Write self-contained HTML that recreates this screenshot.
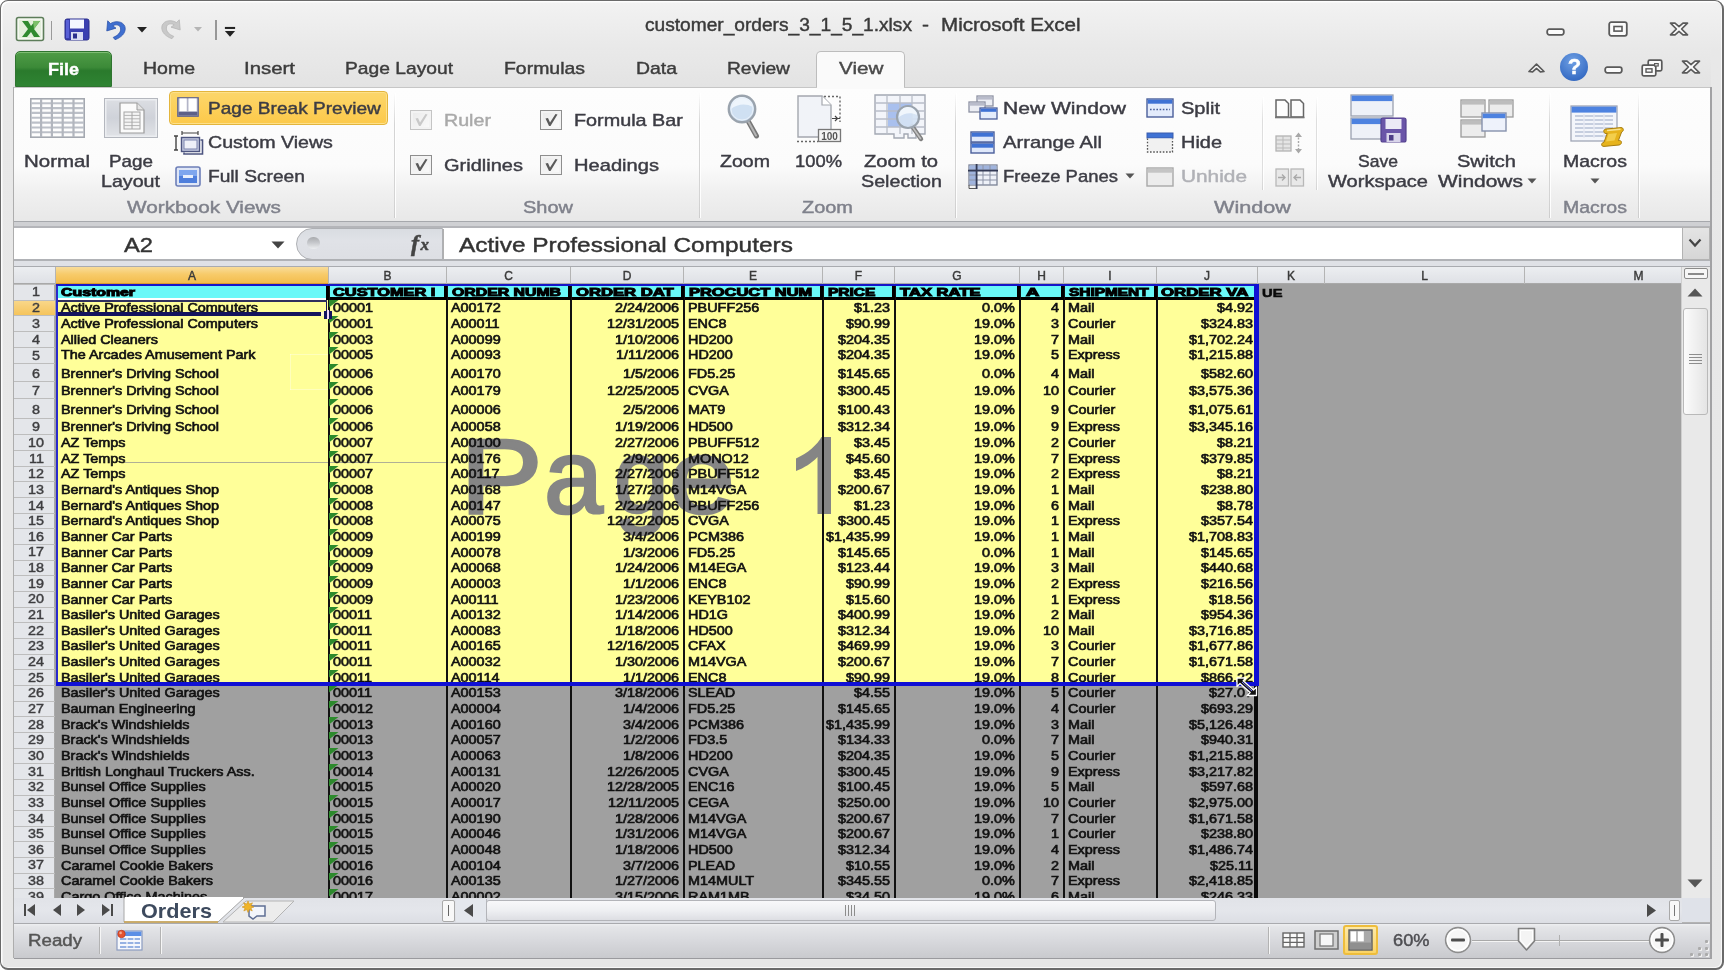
<!DOCTYPE html>
<html><head><meta charset="utf-8"><title>Excel</title>
<style>
html,body{margin:0;padding:0;}
body{width:1724px;height:970px;overflow:hidden;background:#fff;position:relative;font-family:"Liberation Sans",sans-serif;}
.t{position:absolute;white-space:pre;display:block;}
.a{position:absolute;}
svg{position:absolute;overflow:visible;}
#root{position:absolute;left:0;top:0;width:1724px;height:970px;filter:blur(0.55px);}

</style></head>
<body><div id="root">
<div class="a" style="left:0;top:0;width:1724px;height:970px;box-sizing:border-box;border:1.6px solid #6a6a6a;border-bottom-width:2.2px;border-right-width:2px;border-radius:8px 9px 8px 8px;background:linear-gradient(#f0f0f0 0,#e8e8e8 50px,#e6e6e6 100%);box-shadow:inset 1.5px 1.5px 0 rgba(255,255,255,0.9),inset -1px -1px 0 rgba(255,255,255,0.7);"></div>
<div class="a" style="left:3px;top:3px;width:1718px;height:47px;border-radius:7px 7px 0 0;background:linear-gradient(#f2f2f2,#e8e8e8);"></div>
<div class="a" style="left:13px;top:50px;width:1698px;height:37px;background:linear-gradient(#e9e9e9,#e3e3e3);"></div>
<div class="a" style="left:12.5px;top:87px;width:1.5px;height:871px;background:#adadad;"></div>
<div class="a" style="left:1710.2px;top:87px;width:1.4px;height:872px;background:#a2a2a4;"></div>
<span class="t" style="left:645.0px;transform-origin:0 0;top:15.8px;font-size:18.0px;line-height:18.0px;color:#3a3a3a;transform:scaleX(1.063);-webkit-text-stroke:0.42px #3a3a3a;">customer_orders_3_1_5_1.xlsx</span>
<span class="t" style="left:922.0px;transform-origin:0 0;top:15.8px;font-size:18.0px;line-height:18.0px;color:#3a3a3a;transform:scaleX(1.168);-webkit-text-stroke:0.42px #3a3a3a;">-</span>
<span class="t" style="left:940.5px;transform-origin:0 0;top:15.8px;font-size:18.0px;line-height:18.0px;color:#3a3a3a;transform:scaleX(1.143);-webkit-text-stroke:0.42px #3a3a3a;">Microsoft Excel</span>
<svg style="left:16px;top:16px" width="30" height="28" viewBox="0 0 30 28"><rect x="0.5" y="1.5" width="27" height="23" rx="2" fill="#f4f8f0" stroke="#5d7d5a" stroke-width="1.6"/><rect x="3" y="4" width="22" height="18" fill="#e3efdc"/><path d="M6 5 L12 5 L15 10 L19 5 L24 5 L18 13 L24 21 L18 21 L15 16 L11 21 L6 21 L12 13 Z" fill="#2f8a2f"/><path d="M17 5 L24 5 L18 13 Z" fill="#7cc06a"/></svg>
<div class="a" style="left:51px;top:21px;width:1px;height:19px;background:#9a9a9a;"></div>
<svg style="left:64px;top:18px" width="27" height="24" viewBox="0 0 27 24"><rect x="1" y="1" width="24" height="21" rx="2" fill="#3a3fb0" stroke="#2b2f8e" stroke-width="1"/><rect x="6" y="1.5" width="14" height="9" fill="#f4f6ff"/><rect x="7" y="14" width="12" height="8" fill="#d9dcf2"/><rect x="9" y="15.5" width="4" height="5" fill="#2b2f8e"/><rect x="2" y="2" width="3" height="18" fill="#5960d6"/></svg>
<svg style="left:103px;top:18px" width="26" height="24" viewBox="0 0 28 26"><path d="M5 3 L4 14 L14 11 L10.5 8.5 C15 6 19 8 19 12 C19 16 16 19 11 21 L13 23.5 C20 21 24 16.5 24 11.5 C24 5 15.5 1.5 8 6 Z" fill="#3f6fd0" stroke="#2a50a8" stroke-width="0.8"/></svg>
<svg style="left:135.5px;top:25.5px" width="12" height="8" viewBox="0 0 12 8"><path d="M1 1 L11 1 L6 6.5 Z" fill="#222"/></svg>
<svg style="left:158px;top:17px" width="26" height="24" viewBox="0 0 28 26"><path d="M23 3 L24 14 L14 11 L17.5 8.5 C13 6 9 8 9 12 C9 16 12 19 17 21 L15 23.5 C8 21 4 16.5 4 11.5 C4 5 12.5 1.5 20 6 Z" fill="#c9c9c9" stroke="#b4b4b4" stroke-width="0.8"/></svg>
<svg style="left:193px;top:26px" width="10" height="7" viewBox="0 0 10 7"><path d="M1 1 L9 1 L5 5.5 Z" fill="#b5b5b5"/></svg>
<div class="a" style="left:215px;top:20px;width:1.5px;height:20px;background:#979797;"></div>
<svg style="left:222.5px;top:25.5px" width="14" height="13" viewBox="0 0 14 14"><rect x="1.5" y="1" width="11" height="2.2" fill="#222"/><path d="M1.5 5.5 L12.5 5.5 L7 11.5 Z" fill="#222"/></svg>
<svg style="left:1546px;top:28px" width="19" height="8" viewBox="0 0 19 8"><rect x="1.2" y="1.2" width="16.6" height="5.6" rx="2" fill="#fbfbfb" stroke="#5a5a5a" stroke-width="1.8"/></svg>
<svg style="left:1608px;top:21px" width="20" height="16" viewBox="0 0 20 16"><rect x="1.2" y="1.2" width="17.6" height="13.6" rx="2" fill="#fbfbfb" stroke="#5a5a5a" stroke-width="1.8"/><rect x="6" y="5.5" width="8" height="4.6" fill="#fbfbfb" stroke="#5a5a5a" stroke-width="1.6"/></svg>
<svg style="left:1669px;top:22px" width="20" height="14" viewBox="0 0 20 14" preserveAspectRatio="none"><path d="M1.5 1.2 L6 1.2 L10 4.6 L14 1.2 L18.5 1.2 L12.6 7 L18.5 12.8 L14 12.8 L10 9.4 L6 12.8 L1.5 12.8 L7.4 7 Z" fill="#fbfbfb" stroke="#5a5a5a" stroke-width="1.7" stroke-linejoin="round"/></svg>
<svg style="left:1527px;top:62px" width="19" height="12" viewBox="0 0 19 12"><path d="M2 9.5 L9.5 2.2 L17 9.5 L13.4 9.9 L9.5 6.4 L5.6 9.9 Z" fill="#fbfbfb" stroke="#5a5a5a" stroke-width="1.7" stroke-linejoin="round"/></svg>
<div class="a" style="left:1560px;top:53px;width:28px;height:28px;border-radius:14px;background:radial-gradient(circle at 45% 30%,#6fa0e4,#3a6fc6 70%,#2d5fb4);"></div>
<span class="t" style="left:1567.8px;transform-origin:0 0;top:56.4px;font-size:22.0px;line-height:22.0px;color:#fff;font-weight:bold;transform:scaleX(1.000);-webkit-text-stroke:0.42px #fff;">?</span>
<svg style="left:1604px;top:66px" width="19" height="8" viewBox="0 0 19 8"><rect x="1.2" y="1.2" width="16.6" height="5.6" rx="2" fill="#fbfbfb" stroke="#5a5a5a" stroke-width="1.8"/></svg>
<svg style="left:1641px;top:59px" width="22" height="18" viewBox="0 0 22 18"><rect x="7.2" y="1.2" width="13.6" height="10.6" rx="1.5" fill="#fbfbfb" stroke="#5a5a5a" stroke-width="1.7"/><rect x="1.2" y="6.2" width="13.6" height="10.6" rx="1.5" fill="#fbfbfb" stroke="#5a5a5a" stroke-width="1.7"/><rect x="5" y="9.8" width="6" height="3.4" fill="#fbfbfb" stroke="#5a5a5a" stroke-width="1.4"/><rect x="13.6" y="4.6" width="3.6" height="2.4" fill="#fbfbfb" stroke="#5a5a5a" stroke-width="1.2"/></svg>
<svg style="left:1681px;top:60px" width="20" height="14" viewBox="0 0 20 14" preserveAspectRatio="none"><path d="M1.5 1.2 L6 1.2 L10 4.6 L14 1.2 L18.5 1.2 L12.6 7 L18.5 12.8 L14 12.8 L10 9.4 L6 12.8 L1.5 12.8 L7.4 7 Z" fill="#fbfbfb" stroke="#5a5a5a" stroke-width="1.7" stroke-linejoin="round"/></svg>
<div class="a" style="left:15px;top:51px;width:97px;height:36px;border-radius:5px 5px 0 0;background:linear-gradient(#4f9c47 0,#3c8a38 45%,#2a7a2c 55%,#2f8433 100%);border:1px solid #2f7430;box-sizing:border-box;box-shadow:inset 0 1px 0 #7fbd74;"></div>
<span class="t" style="left:48.0px;transform-origin:0 0;top:60.6px;font-size:17.0px;line-height:17.0px;color:#fff;font-weight:bold;transform:scaleX(1.059);-webkit-text-stroke:0.42px #fff;">File</span>
<span class="t" style="left:143.0px;transform-origin:0 0;top:60.1px;font-size:17.0px;line-height:17.0px;color:#3c3c3c;transform:scaleX(1.147);-webkit-text-stroke:0.42px #3c3c3c;">Home</span>
<span class="t" style="left:244.0px;transform-origin:0 0;top:60.1px;font-size:17.0px;line-height:17.0px;color:#3c3c3c;transform:scaleX(1.200);-webkit-text-stroke:0.42px #3c3c3c;">Insert</span>
<span class="t" style="left:345.0px;transform-origin:0 0;top:60.1px;font-size:17.0px;line-height:17.0px;color:#3c3c3c;transform:scaleX(1.131);-webkit-text-stroke:0.42px #3c3c3c;">Page Layout</span>
<span class="t" style="left:504.0px;transform-origin:0 0;top:60.1px;font-size:17.0px;line-height:17.0px;color:#3c3c3c;transform:scaleX(1.143);-webkit-text-stroke:0.42px #3c3c3c;">Formulas</span>
<span class="t" style="left:636.0px;transform-origin:0 0;top:60.1px;font-size:17.0px;line-height:17.0px;color:#3c3c3c;transform:scaleX(1.142);-webkit-text-stroke:0.42px #3c3c3c;">Data</span>
<span class="t" style="left:727.0px;transform-origin:0 0;top:60.1px;font-size:17.0px;line-height:17.0px;color:#3c3c3c;transform:scaleX(1.130);-webkit-text-stroke:0.42px #3c3c3c;">Review</span>
<div class="a" style="left:816px;top:51px;width:89px;height:37px;border-radius:5px 5px 0 0;background:#fafafa;border:1px solid #bdbdbd;border-bottom:none;box-sizing:border-box;"></div>
<span class="t" style="left:839.0px;transform-origin:0 0;top:60.1px;font-size:17.0px;line-height:17.0px;color:#4a4a4a;transform:scaleX(1.218);-webkit-text-stroke:0.42px #4a4a4a;">View</span>
<div class="a" style="left:14px;top:87px;width:1696px;height:134.6px;background:linear-gradient(#fdfdfd 0,#fbfbfb 58%,#f0f0f0 78%,#e8e8e8 100%);border-top:1px solid #c6c6c6;border-bottom:1.8px solid #a6a8ac;box-sizing:border-box;"></div>
<div class="a" style="left:817px;top:86px;width:87px;height:3px;background:#fafafa;"></div>
<div class="a" style="left:394px;top:93px;width:1px;height:125px;background:linear-gradient(rgba(0,0,0,0),#d4d4d4 25%,#d4d4d4 80%,rgba(0,0,0,0.12));"></div>
<div class="a" style="left:395px;top:93px;width:1px;height:125px;background:rgba(255,255,255,0.9);"></div>
<div class="a" style="left:699px;top:93px;width:1px;height:125px;background:linear-gradient(rgba(0,0,0,0),#d4d4d4 25%,#d4d4d4 80%,rgba(0,0,0,0.12));"></div>
<div class="a" style="left:700px;top:93px;width:1px;height:125px;background:rgba(255,255,255,0.9);"></div>
<div class="a" style="left:955px;top:93px;width:1px;height:125px;background:linear-gradient(rgba(0,0,0,0),#d4d4d4 25%,#d4d4d4 80%,rgba(0,0,0,0.12));"></div>
<div class="a" style="left:956px;top:93px;width:1px;height:125px;background:rgba(255,255,255,0.9);"></div>
<div class="a" style="left:1549px;top:93px;width:1px;height:125px;background:linear-gradient(rgba(0,0,0,0),#d4d4d4 25%,#d4d4d4 80%,rgba(0,0,0,0.12));"></div>
<div class="a" style="left:1550px;top:93px;width:1px;height:125px;background:rgba(255,255,255,0.9);"></div>
<div class="a" style="left:1638px;top:93px;width:1px;height:125px;background:linear-gradient(rgba(0,0,0,0),#d4d4d4 25%,#d4d4d4 80%,rgba(0,0,0,0.12));"></div>
<div class="a" style="left:1639px;top:93px;width:1px;height:125px;background:rgba(255,255,255,0.9);"></div>
<div class="a" style="left:1262px;top:97px;width:1px;height:93px;background:linear-gradient(rgba(0,0,0,0),#dedede 25%,#dedede 80%,rgba(0,0,0,0.12));"></div>
<div class="a" style="left:1263px;top:97px;width:1px;height:93px;background:rgba(255,255,255,0.9);"></div>
<div class="a" style="left:1316px;top:97px;width:1px;height:93px;background:linear-gradient(rgba(0,0,0,0),#dedede 25%,#dedede 80%,rgba(0,0,0,0.12));"></div>
<div class="a" style="left:1317px;top:97px;width:1px;height:93px;background:rgba(255,255,255,0.9);"></div>
<svg style="left:30px;top:98px" width="55" height="40" viewBox="0 0 55 40"><rect x="0.8" y="0.8" width="53.4" height="38.4" fill="#fdfdfd" stroke="#a4a8b0" stroke-width="1.6"/><line x1="1" x2="54" y1="5.2" y2="5.2" stroke="#bcc0c8" stroke-width="2.1"/><line x1="1" x2="54" y1="10.1" y2="10.1" stroke="#bcc0c8" stroke-width="2.1"/><line x1="1" x2="54" y1="14.9" y2="14.9" stroke="#bcc0c8" stroke-width="2.1"/><line x1="1" x2="54" y1="19.8" y2="19.8" stroke="#bcc0c8" stroke-width="2.1"/><line x1="1" x2="54" y1="24.6" y2="24.6" stroke="#bcc0c8" stroke-width="2.1"/><line x1="1" x2="54" y1="29.5" y2="29.5" stroke="#bcc0c8" stroke-width="2.1"/><line x1="1" x2="54" y1="34.3" y2="34.3" stroke="#bcc0c8" stroke-width="2.1"/><line y1="1" y2="39" x1="11.1" x2="11.1" stroke="#b2b6be" stroke-width="2.2"/><line y1="1" y2="39" x1="21.9" x2="21.9" stroke="#b2b6be" stroke-width="2.2"/><line y1="1" y2="39" x1="32.7" x2="32.7" stroke="#b2b6be" stroke-width="2.2"/><line y1="1" y2="39" x1="43.5" x2="43.5" stroke="#b2b6be" stroke-width="2.2"/></svg>
<span class="t" style="left:24.0px;transform-origin:0 0;top:152.7px;font-size:16.4px;line-height:16.4px;color:#3c3c44;transform:scaleX(1.249);-webkit-text-stroke:0.42px #3c3c44;">Normal</span>
<div class="a" style="left:104px;top:98px;width:54px;height:40px;box-sizing:border-box;border:1.4px solid #b4b7be;background:linear-gradient(#dcdee3,#cfd2d9 50%,#e1e3e7);box-shadow:inset 0 0 0 1.5px #eceef1;"></div>
<svg style="left:119px;top:102px" width="26" height="32" viewBox="0 0 26 32"><path d="M1 1 L18 1 L25 8 L25 31 L1 31 Z" fill="#fbfbfb" stroke="#9b9b9b" stroke-width="1.2"/><path d="M18 1 L18 8 L25 8" fill="#e4e4e4" stroke="#9b9b9b" stroke-width="1"/><rect x="5" y="10" width="16" height="17" fill="#f4f4f4" stroke="#a6a6a6" stroke-width="1"/><line x1="5" x2="21" y1="13.4" y2="13.4" stroke="#b4b4b4"/><line x1="5" x2="21" y1="16.8" y2="16.8" stroke="#b4b4b4"/><line x1="5" x2="21" y1="20.2" y2="20.2" stroke="#b4b4b4"/><line x1="5" x2="21" y1="23.6" y2="23.6" stroke="#b4b4b4"/><line x1="13" x2="13" y1="10" y2="27" stroke="#a6a6a6"/></svg>
<span class="t" style="left:109.0px;transform-origin:0 0;top:152.7px;font-size:16.4px;line-height:16.4px;color:#3c3c44;transform:scaleX(1.149);-webkit-text-stroke:0.42px #3c3c44;">Page</span>
<span class="t" style="left:101.0px;transform-origin:0 0;top:172.9px;font-size:16.4px;line-height:16.4px;color:#3c3c44;transform:scaleX(1.198);-webkit-text-stroke:0.42px #3c3c44;">Layout</span>
<div class="a" style="left:169px;top:91px;width:219px;height:34px;box-sizing:border-box;border:1.5px solid #e3b53c;border-radius:4px;background:linear-gradient(#fbd66b,#fdd05a 50%,#fcc94a);box-shadow:inset 0 0 0 1px #fde08a;"></div>
<svg style="left:176.5px;top:97px" width="22" height="20" viewBox="0 0 23 22" preserveAspectRatio="none"><rect x="0.8" y="0.8" width="21.4" height="20.4" fill="#b3b5c8" stroke="#62658c" stroke-width="1.3"/><rect x="2.6" y="1.6" width="7.6" height="14" fill="#fff"/><rect x="12" y="1.6" width="8.6" height="14" fill="#fff"/><rect x="1.6" y="16.4" width="19.8" height="4" fill="#5d6088"/></svg>
<span class="t" style="left:208.0px;transform-origin:0 0;top:99.8px;font-size:16.4px;line-height:16.4px;color:#3c3c44;transform:scaleX(1.164);-webkit-text-stroke:0.42px #3c3c44;">Page Break Preview</span>
<svg style="left:173px;top:130px" width="32" height="25" viewBox="0 0 32 25"><path d="M1 6 L5 6 M3 6 L3 20 M1 20 L5 20" stroke="#444" stroke-width="1.4" fill="none"/><path d="M9 1 L9 5 M25 1 L25 5 M9 3 L25 3" stroke="#444" stroke-width="1.2" fill="none"/><rect x="8.5" y="7.5" width="18" height="14" fill="#c6cbe0" stroke="#4d5580" stroke-width="1.4"/><rect x="11" y="10" width="13" height="9" fill="#eef0f8" stroke="#7a83ad"/><path d="M27.5 10 L29.5 10 L29.5 24 L11 24 L11 22.5" fill="none" stroke="#4d5580" stroke-width="1.6"/></svg>
<span class="t" style="left:208.0px;transform-origin:0 0;top:134.4px;font-size:16.4px;line-height:16.4px;color:#3c3c44;transform:scaleX(1.196);-webkit-text-stroke:0.42px #3c3c44;">Custom Views</span>
<svg style="left:175px;top:166px" width="26" height="21" viewBox="0 0 26 21"><rect x="1" y="1" width="24" height="19" rx="2" fill="#dfe6f6" stroke="#6d7fb8" stroke-width="1.6"/><rect x="4" y="4" width="18" height="13" fill="#4f7fdc"/><rect x="4" y="4" width="18" height="6" fill="#7ea6ee"/><rect x="8" y="9" width="10" height="3" fill="#e8effc"/></svg>
<span class="t" style="left:208.0px;transform-origin:0 0;top:168.4px;font-size:16.4px;line-height:16.4px;color:#3c3c44;transform:scaleX(1.169);-webkit-text-stroke:0.42px #3c3c44;">Full Screen</span>
<span class="t" style="left:127.0px;transform-origin:0 0;top:199.3px;font-size:16.4px;line-height:16.4px;color:#7f818b;transform:scaleX(1.267);-webkit-text-stroke:0.42px #7f818b;">Workbook Views</span>
<div class="a" style="left:410px;top:110px;width:22px;height:20px;box-sizing:border-box;border:1.5px solid #c4c4c4;background:linear-gradient(135deg,#e9e9e9,#fbfbfb);box-shadow:inset 0 0 0 2px #f3f3f3;"></div>
<svg style="left:410px;top:110px" width="22" height="20" viewBox="0 0 22 20"><path d="M5.5 8.5 L8 8 L10 12.5 L15.5 4 L17.5 4.6 L10.5 16 L9 16 Z" fill="#c9c9c9"/></svg>
<div class="a" style="left:410px;top:155px;width:22px;height:20px;box-sizing:border-box;border:1.5px solid #8e8e8e;background:linear-gradient(135deg,#e9e9e9,#fbfbfb);box-shadow:inset 0 0 0 2px #f3f3f3;"></div>
<svg style="left:410px;top:155px" width="22" height="20" viewBox="0 0 22 20"><path d="M5.5 8.5 L8 8 L10 12.5 L15.5 4 L17.5 4.6 L10.5 16 L9 16 Z" fill="#5a5a5a"/></svg>
<div class="a" style="left:540px;top:110px;width:22px;height:20px;box-sizing:border-box;border:1.5px solid #8e8e8e;background:linear-gradient(135deg,#e9e9e9,#fbfbfb);box-shadow:inset 0 0 0 2px #f3f3f3;"></div>
<svg style="left:540px;top:110px" width="22" height="20" viewBox="0 0 22 20"><path d="M5.5 8.5 L8 8 L10 12.5 L15.5 4 L17.5 4.6 L10.5 16 L9 16 Z" fill="#5a5a5a"/></svg>
<div class="a" style="left:540px;top:155px;width:22px;height:20px;box-sizing:border-box;border:1.5px solid #8e8e8e;background:linear-gradient(135deg,#e9e9e9,#fbfbfb);box-shadow:inset 0 0 0 2px #f3f3f3;"></div>
<svg style="left:540px;top:155px" width="22" height="20" viewBox="0 0 22 20"><path d="M5.5 8.5 L8 8 L10 12.5 L15.5 4 L17.5 4.6 L10.5 16 L9 16 Z" fill="#5a5a5a"/></svg>
<span class="t" style="left:444.0px;transform-origin:0 0;top:112.1px;font-size:16.4px;line-height:16.4px;color:#a9a9a9;transform:scaleX(1.199);-webkit-text-stroke:0.42px #a9a9a9;">Ruler</span>
<span class="t" style="left:574.0px;transform-origin:0 0;top:112.1px;font-size:16.4px;line-height:16.4px;color:#3c3c44;transform:scaleX(1.208);-webkit-text-stroke:0.42px #3c3c44;">Formula Bar</span>
<span class="t" style="left:444.0px;transform-origin:0 0;top:157.2px;font-size:16.4px;line-height:16.4px;color:#3c3c44;transform:scaleX(1.221);-webkit-text-stroke:0.42px #3c3c44;">Gridlines</span>
<span class="t" style="left:574.0px;transform-origin:0 0;top:157.2px;font-size:16.4px;line-height:16.4px;color:#3c3c44;transform:scaleX(1.227);-webkit-text-stroke:0.42px #3c3c44;">Headings</span>
<span class="t" style="left:523.0px;transform-origin:0 0;top:199.3px;font-size:16.4px;line-height:16.4px;color:#7f818b;transform:scaleX(1.219);-webkit-text-stroke:0.42px #7f818b;">Show</span>
<svg style="left:726px;top:94px" width="36" height="48" viewBox="0 0 36 48"><path d="M21 25 L30.5 42" stroke="#777" stroke-width="5" stroke-linecap="round"/><path d="M21.5 26 L30 41.5" stroke="#b5b5b5" stroke-width="2" stroke-linecap="round"/><circle cx="16" cy="15" r="13.2" fill="#cfe0f2" stroke="#9aa3ad" stroke-width="2.4"/><path d="M5 15 A11 11 0 0 1 27 13 C20 9 11 10 5 15Z" fill="#eef5fc"/><circle cx="16" cy="15" r="11" fill="none" stroke="#e9f1fa" stroke-width="1"/></svg>
<span class="t" style="left:720.0px;transform-origin:0 0;top:152.7px;font-size:16.4px;line-height:16.4px;color:#3c3c44;transform:scaleX(1.193);-webkit-text-stroke:0.42px #3c3c44;">Zoom</span>
<svg style="left:796px;top:94px" width="46" height="50" viewBox="0 0 46 50"><path d="M2 2 L26 2 L35 11 L35 43 L2 43 Z" fill="#f1f3f8" stroke="#a4a7ae" stroke-width="1.4"/><path d="M26 2 L26 11 L35 11" fill="#fff" stroke="#a4a7ae" stroke-width="1.2"/><path d="M28 2.5 L44 2.5 L44 28" fill="none" stroke="#666" stroke-width="1.4" stroke-dasharray="2 2"/><path d="M1 47.5 L22 47.5" fill="none" stroke="#666" stroke-width="1.4" stroke-dasharray="2 2"/><path d="M36 24.5 L44 24.5 M39 22 L41.5 24.5 L39 27" stroke="#444" stroke-width="1.2" fill="none"/><rect x="22.5" y="35.5" width="22" height="12" fill="#f4f4f4" stroke="#777" stroke-width="1.3"/><text x="33.5" y="45.5" font-family="Liberation Sans" font-weight="bold" font-size="10" text-anchor="middle" fill="#555">100</text></svg>
<span class="t" style="left:795.0px;transform-origin:0 0;top:152.7px;font-size:16.4px;line-height:16.4px;color:#3c3c44;transform:scaleX(1.120);-webkit-text-stroke:0.42px #3c3c44;">100%</span>
<svg style="left:874px;top:94px" width="52" height="50" viewBox="0 0 52 50"><path d="M1 1 L51 1 L51 40 L42 40 L42 44 L34 44 L34 40 L30 40 L30 44 L20 44 L20 40 L1 40 Z" fill="#f3f5fa" stroke="#a3a8b3" stroke-width="1.4"/><rect x="14" y="9" width="24" height="24" fill="#a9c0ee"/><line x1="1" x2="51" y1="9" y2="9" stroke="#b8bdc8" stroke-width="1.3"/><line x1="1" x2="51" y1="17" y2="17" stroke="#b8bdc8" stroke-width="1.3"/><line x1="1" x2="51" y1="25" y2="25" stroke="#b8bdc8" stroke-width="1.3"/><line x1="1" x2="51" y1="33" y2="33" stroke="#b8bdc8" stroke-width="1.3"/><line y1="1" y2="40" x1="13" x2="13" stroke="#b8bdc8" stroke-width="1.3"/><line y1="1" y2="40" x1="26" x2="26" stroke="#b8bdc8" stroke-width="1.3"/><line y1="1" y2="40" x1="38" x2="38" stroke="#b8bdc8" stroke-width="1.3"/><path d="M38 32 L47 45" stroke="#808080" stroke-width="4.5" stroke-linecap="round"/><path d="M38.5 33 L46.5 44.5" stroke="#c0c0c0" stroke-width="1.6" stroke-linecap="round"/><circle cx="34" cy="23" r="11" fill="#d5e3f4" fill-opacity="0.92" stroke="#9aa3ad" stroke-width="2.2"/><path d="M25 23 A9 9 0 0 1 43 21 C37 18 30 19 25 23Z" fill="#f0f6fc"/></svg>
<span class="t" style="left:864.0px;transform-origin:0 0;top:152.7px;font-size:16.4px;line-height:16.4px;color:#3c3c44;transform:scaleX(1.230);-webkit-text-stroke:0.42px #3c3c44;">Zoom to</span>
<span class="t" style="left:861.0px;transform-origin:0 0;top:172.9px;font-size:16.4px;line-height:16.4px;color:#3c3c44;transform:scaleX(1.201);-webkit-text-stroke:0.42px #3c3c44;">Selection</span>
<span class="t" style="left:802.0px;transform-origin:0 0;top:199.3px;font-size:16.4px;line-height:16.4px;color:#7f818b;transform:scaleX(1.217);-webkit-text-stroke:0.42px #7f818b;">Zoom</span>
<svg style="left:968px;top:95px" width="30" height="26" viewBox="0 0 30 26"><rect x="9.0" y="1.0" width="16.0" height="10.0" fill="#eceef4" stroke="#8d91a3" stroke-width="1.3"/><rect x="9.7" y="1.6" width="14.7" height="3.0" fill="#b9bccb"/><rect x="1.0" y="7.0" width="16.0" height="10.0" fill="#eceef4" stroke="#8d91a3" stroke-width="1.3"/><rect x="1.6" y="7.7" width="14.7" height="3.0" fill="#b9bccb"/><rect x="12.0" y="13.0" width="17.0" height="11.0" fill="#e4ecfb" stroke="#4a5f9a" stroke-width="1.3"/><rect x="12.7" y="13.7" width="15.7" height="3.1" fill="#3f72d4"/></svg>
<span class="t" style="left:1003.0px;transform-origin:0 0;top:99.8px;font-size:16.4px;line-height:16.4px;color:#3c3c44;transform:scaleX(1.285);-webkit-text-stroke:0.42px #3c3c44;">New Window</span>
<svg style="left:970px;top:131px" width="26" height="24" viewBox="0 0 26 24"><rect x="1.0" y="1.0" width="23.0" height="10.0" fill="#dfe8fa" stroke="#4a5f9a" stroke-width="1.4"/><rect x="1.7" y="1.7" width="21.6" height="4.0" fill="#3f72d4"/><rect x="1.0" y="12.0" width="23.0" height="10.0" fill="#dfe8fa" stroke="#4a5f9a" stroke-width="1.4"/><rect x="1.7" y="12.7" width="21.6" height="4.0" fill="#3f72d4"/></svg>
<span class="t" style="left:1003.0px;transform-origin:0 0;top:134.4px;font-size:16.4px;line-height:16.4px;color:#3c3c44;transform:scaleX(1.234);-webkit-text-stroke:0.42px #3c3c44;">Arrange All</span>
<svg style="left:968px;top:164px" width="30" height="26" viewBox="0 0 30 26"><rect x="1" y="1" width="28" height="20" fill="#eef1f8" stroke="#7a8194" stroke-width="1.3"/><rect x="1.6" y="1.6" width="26.8" height="5" fill="#9fb3dd"/><rect x="1.6" y="1.6" width="7" height="19" fill="#9fb3dd"/><line x1="1" x2="29" y1="6" y2="6" stroke="#8c93a6" stroke-width="1"/><line x1="1" x2="29" y1="11" y2="11" stroke="#8c93a6" stroke-width="1"/><line x1="1" x2="29" y1="16" y2="16" stroke="#8c93a6" stroke-width="1"/><line y1="1" y2="21" x1="15" x2="15" stroke="#8c93a6" stroke-width="1"/><line y1="1" y2="21" x1="22" x2="22" stroke="#8c93a6" stroke-width="1"/><path d="M8.6 0 L8.6 25 M0 6.6 L30 6.6" stroke="#333a55" stroke-width="1.8"/><path d="M1 21 L1 24.5 L8 24.5" stroke="#555" fill="none"/></svg>
<span class="t" style="left:1003.0px;transform-origin:0 0;top:168.4px;font-size:16.4px;line-height:16.4px;color:#3c3c44;transform:scaleX(1.126);-webkit-text-stroke:0.42px #3c3c44;">Freeze Panes</span>
<svg style="left:1125px;top:173px" width="10" height="6" viewBox="0 0 10 6"><path d="M0.5 0.5 L9.5 0.5 L5 5.5 Z" fill="#555"/></svg>
<svg style="left:1146px;top:98px" width="28" height="21" viewBox="0 0 28 21"><rect x="1.0" y="1.0" width="26.0" height="18.0" fill="#e3ebfb" stroke="#4a5f9a" stroke-width="1.4"/><rect x="1.7" y="1.7" width="24.6" height="4.0" fill="#3f72d4"/><line x1="4" x2="24" y1="11.5" y2="11.5" stroke="#4a5f9a" stroke-width="1.4" stroke-dasharray="1.6 1.6"/></svg>
<span class="t" style="left:1181.0px;transform-origin:0 0;top:99.8px;font-size:16.4px;line-height:16.4px;color:#3c3c44;transform:scaleX(1.222);-webkit-text-stroke:0.42px #3c3c44;">Split</span>
<svg style="left:1146px;top:132px" width="28" height="22" viewBox="0 0 28 22"><rect x="1" y="1" width="26" height="5" fill="#3f72d4" stroke="#3a5cae" stroke-width="1"/><rect x="1.5" y="6.5" width="25" height="13" fill="#f1f1f1"/><path d="M1.5 6.5 L1.5 20 L26.5 20 L26.5 6.5" fill="none" stroke="#555" stroke-width="1.3" stroke-dasharray="1.6 1.6"/></svg>
<span class="t" style="left:1181.0px;transform-origin:0 0;top:134.4px;font-size:16.4px;line-height:16.4px;color:#3c3c44;transform:scaleX(1.216);-webkit-text-stroke:0.42px #3c3c44;">Hide</span>
<svg style="left:1146px;top:167px" width="28" height="21" viewBox="0 0 28 21"><rect x="1" y="1" width="26" height="18" fill="#ececec" stroke="#a8a8a8" stroke-width="1.4"/><rect x="1.7" y="1.7" width="24.6" height="4" fill="#c4c4c4"/></svg>
<span class="t" style="left:1181.0px;transform-origin:0 0;top:168.4px;font-size:16.4px;line-height:16.4px;color:#b0b1b6;transform:scaleX(1.270);-webkit-text-stroke:0.42px #b0b1b6;">Unhide</span>
<svg style="left:1274px;top:98px" width="32" height="21" viewBox="0 0 32 21"><path d="M2 2 L11 2 L14.5 5.5 L14.5 19 L2 19 Z" fill="#fdfdfd" stroke="#666" stroke-width="1.5"/><path d="M17 2 L26 2 L29.5 5.5 L29.5 19 L17 19 Z" fill="#fdfdfd" stroke="#666" stroke-width="1.5"/><path d="M1 19.5 L30.5 19.5" stroke="#777" stroke-width="1.6"/></svg>
<svg style="left:1274px;top:131px" width="32" height="24" viewBox="0 0 32 24"><rect x="2" y="5" width="15" height="15" fill="#e4e4e4" stroke="#b3b3b3" stroke-width="1.3"/><path d="M2 9 L17 9 M2 13 L17 13 M2 17 L17 17 M9 5 L9 20" stroke="#b9b9b9"/><path d="M24.5 3 L24.5 21" stroke="#a8a8a8" stroke-width="1.4" stroke-dasharray="2 1.5"/><path d="M21 6 L24.5 1.5 L28 6 Z M21 18 L24.5 22.5 L28 18 Z" fill="#a8a8a8"/></svg>
<svg style="left:1274px;top:167px" width="32" height="21" viewBox="0 0 32 21"><rect x="2" y="2" width="12.5" height="17" fill="#e8e8e8" stroke="#b8b8b8" stroke-width="1.3"/><rect x="17" y="2" width="12.5" height="17" fill="#e8e8e8" stroke="#b8b8b8" stroke-width="1.3"/><path d="M4 10.5 L11 10.5 M8 7.5 L11 10.5 L8 13.5" stroke="#a9a9a9" stroke-width="1.4" fill="none"/><path d="M27 10.5 L20 10.5 M23 7.5 L20 10.5 L23 13.5" stroke="#a9a9a9" stroke-width="1.4" fill="none"/></svg>
<svg style="left:1350px;top:94px" width="58" height="50" viewBox="0 0 58 50"><rect x="1.0" y="1.0" width="42.0" height="21.0" fill="#eef1f8" stroke="#9aa0b0" stroke-width="1.3"/><rect x="1.6" y="1.6" width="40.7" height="5.5" fill="#4d82e0"/><rect x="1.0" y="24.0" width="42.0" height="21.0" fill="#eef1f8" stroke="#9aa0b0" stroke-width="1.3"/><rect x="1.6" y="24.6" width="40.7" height="5.5" fill="#4d82e0"/><rect x="31" y="24" width="25" height="24" rx="2" fill="#6a55a8" stroke="#54418f" stroke-width="1.2"/><rect x="35.5" y="25" width="16" height="10" fill="#eceaf6"/><rect x="36.5" y="39" width="14" height="9" fill="#d9d5ea"/><rect x="39" y="41" width="4.5" height="5.5" fill="#4d3c86"/></svg>
<span class="t" style="left:1358.0px;transform-origin:0 0;top:152.7px;font-size:16.4px;line-height:16.4px;color:#3c3c44;transform:scaleX(1.070);-webkit-text-stroke:0.42px #3c3c44;">Save</span>
<span class="t" style="left:1328.0px;transform-origin:0 0;top:172.9px;font-size:16.4px;line-height:16.4px;color:#3c3c44;transform:scaleX(1.224);-webkit-text-stroke:0.42px #3c3c44;">Workspace</span>
<svg style="left:1460px;top:99px" width="56" height="42" viewBox="0 0 56 42"><rect x="1.0" y="1.0" width="24.0" height="17.0" fill="#ececec" stroke="#9a9a9a" stroke-width="1.3"/><rect x="1.6" y="1.6" width="22.7" height="4.0" fill="#bdbdbd"/><rect x="29.0" y="1.0" width="24.0" height="17.0" fill="#ececec" stroke="#9a9a9a" stroke-width="1.3"/><rect x="29.6" y="1.6" width="22.7" height="4.0" fill="#bdbdbd"/><rect x="1.0" y="21.0" width="24.0" height="17.0" fill="#ececec" stroke="#9a9a9a" stroke-width="1.3"/><rect x="1.6" y="21.6" width="22.7" height="4.0" fill="#bdbdbd"/><rect x="22.0" y="14.0" width="24.0" height="18.0" fill="#eef2fb" stroke="#8792ad" stroke-width="1.4"/><rect x="22.7" y="14.7" width="22.6" height="4.5" fill="#4d82e0"/></svg>
<span class="t" style="left:1457.0px;transform-origin:0 0;top:152.7px;font-size:16.4px;line-height:16.4px;color:#3c3c44;transform:scaleX(1.221);-webkit-text-stroke:0.42px #3c3c44;">Switch</span>
<span class="t" style="left:1438.0px;transform-origin:0 0;top:172.9px;font-size:16.4px;line-height:16.4px;color:#3c3c44;transform:scaleX(1.278);-webkit-text-stroke:0.42px #3c3c44;">Windows</span>
<svg style="left:1527px;top:178px" width="10" height="6" viewBox="0 0 10 6"><path d="M0.5 0.5 L9.5 0.5 L5 5.5 Z" fill="#555"/></svg>
<span class="t" style="left:1214.0px;transform-origin:0 0;top:199.3px;font-size:16.4px;line-height:16.4px;color:#7f818b;transform:scaleX(1.320);-webkit-text-stroke:0.42px #7f818b;">Window</span>
<svg style="left:1570px;top:105px" width="56" height="42" viewBox="0 0 56 42"><rect x="1.0" y="1.0" width="46.0" height="35.0" fill="#f4f6fb" stroke="#a0a6b5" stroke-width="1.3"/><rect x="1.6" y="1.6" width="44.7" height="6.0" fill="#4d82e0"/><line x1="5" x2="43" y1="11.0" y2="11.0" stroke="#b7c0d6" stroke-width="1.6"/><line x1="5" x2="43" y1="15.0" y2="15.0" stroke="#b7c0d6" stroke-width="1.6"/><line x1="5" x2="43" y1="19.0" y2="19.0" stroke="#b7c0d6" stroke-width="1.6"/><line x1="5" x2="43" y1="23.0" y2="23.0" stroke="#b7c0d6" stroke-width="1.6"/><line x1="5" x2="43" y1="27.0" y2="27.0" stroke="#b7c0d6" stroke-width="1.6"/><line x1="5" x2="43" y1="31.0" y2="31.0" stroke="#b7c0d6" stroke-width="1.6"/><line y1="9" y2="33" x1="14" x2="14" stroke="#e6e9f2" stroke-width="1.4"/><line y1="9" y2="33" x1="24" x2="24" stroke="#e6e9f2" stroke-width="1.4"/><line y1="9" y2="33" x1="34" x2="34" stroke="#e6e9f2" stroke-width="1.4"/><path d="M36 24 L51 22.6 C54 22.6 54 26.4 51.6 27 L48.4 35.6 L49.4 35.5 C52.4 35.5 52 39.6 49 40 L34 41.4 C30.6 41.4 31 37.8 34 37.2 L37.2 28.4 L36 28.5 C33 28.5 33 24.2 36 24 Z" fill="#e6b31c" stroke="#a67c0e" stroke-width="1"/><path d="M38.5 29 L47 28 L44.5 35.5 L36 36.5 Z" fill="#f3cf4c"/><path d="M37 25.6 L50.5 24.3" stroke="#f8e391" stroke-width="1.5" fill="none"/></svg>
<span class="t" style="left:1563.0px;transform-origin:0 0;top:152.7px;font-size:16.4px;line-height:16.4px;color:#3c3c44;transform:scaleX(1.190);-webkit-text-stroke:0.42px #3c3c44;">Macros</span>
<svg style="left:1590px;top:178px" width="10" height="6" viewBox="0 0 10 6"><path d="M0.5 0.5 L9.5 0.5 L5 5.5 Z" fill="#555"/></svg>
<span class="t" style="left:1563.0px;transform-origin:0 0;top:199.3px;font-size:16.4px;line-height:16.4px;color:#7f818b;transform:scaleX(1.190);-webkit-text-stroke:0.42px #7f818b;">Macros</span>
<div class="a" style="left:14px;top:221.6px;width:1696px;height:46px;background:#cfd0d3;"></div>
<div class="a" style="left:14px;top:260.9px;width:1696px;height:5.4px;background:#dfe1e6;"></div>
<div class="a" style="left:14px;top:266.3px;width:1696px;height:1.2px;background:#a9abb0;"></div>
<div class="a" style="left:14px;top:226.3px;width:1696px;height:34.6px;background:#fff;border-top:2.1px solid #b4b5b9;border-bottom:2.1px solid #b0b2b6;box-sizing:border-box;"></div>
<div class="a" style="left:296px;top:227.6px;width:147px;height:32px;box-sizing:border-box;border:1.3px solid #aeb0b4;border-radius:16px 0 0 16px;background:linear-gradient(#d9dce1,#e0e2e7 40%,#dddfe4);"></div>
<div class="a" style="left:306.5px;top:237px;width:13px;height:11.5px;border-radius:6px;background:linear-gradient(#a9abae,#c4c6ca 45%,#eceef0 100%);"></div>
<div class="a" style="left:443px;top:229px;width:1px;height:30px;background:#b0b0b0;"></div>
<span class="t" style="left:124.0px;transform-origin:0 0;top:233.7px;font-size:21.0px;line-height:21.0px;color:#333;transform:scaleX(1.129);-webkit-text-stroke:0.42px #333;">A2</span>
<svg style="left:271px;top:241px" width="14" height="8" viewBox="0 0 14 8"><path d="M0.5 0.5 L13.5 0.5 L7 7.5 Z" fill="#444"/></svg>
<span class="t" style="left:411px;top:230px;font-family:'Liberation Serif',serif;font-style:italic;font-weight:bold;font-size:24px;line-height:26px;color:#444;-webkit-text-stroke:0.5px #444;">f</span>
<span class="t" style="left:420.5px;top:236px;font-family:'Liberation Serif',serif;font-style:italic;font-weight:bold;font-size:17px;line-height:18px;color:#444;-webkit-text-stroke:0.5px #444;">x</span>
<span class="t" style="left:459.0px;transform-origin:0 0;top:233.7px;font-size:21.0px;line-height:21.0px;color:#333;transform:scaleX(1.163);-webkit-text-stroke:0.42px #333;">Active Professional Computers</span>
<div class="a" style="left:1682px;top:226.8px;width:27.5px;height:33.6px;box-sizing:border-box;border:1.6px solid #b3b3b3;background:linear-gradient(#e4e4e4,#d6d6d6);"></div>
<svg style="left:1688px;top:238px" width="14" height="10" viewBox="0 0 14 10"><path d="M1.5 1.5 L7 7.5 L12.5 1.5" fill="none" stroke="#444" stroke-width="2.2"/></svg>
<div class="a" style="left:14px;top:267px;width:1667px;height:631px;overflow:hidden;background:#a0a0a0;">
<div class="a" style="left:0.0px;top:0.0px;width:1667.0px;height:17.0px;background:linear-gradient(#eceef1,#e4e6ea 60%,#dfe1e6);border-bottom:1px solid #a9a9a9;box-sizing:border-box;"></div>
<div class="a" style="left:41.0px;top:0.0px;width:273.0px;height:17.0px;background:linear-gradient(#f8dc9a,#f7cb6a 45%,#f3bd4d);border-bottom:1px solid #d89a2e;box-sizing:border-box;"></div>
<div class="a" style="left:41.0px;top:0.0px;width:1.0px;height:17.0px;background:#b4b4b4;"></div>
<div class="a" style="left:314.0px;top:0.0px;width:1.0px;height:17.0px;background:#b4b4b4;"></div>
<div class="a" style="left:432.0px;top:0.0px;width:1.0px;height:17.0px;background:#b4b4b4;"></div>
<div class="a" style="left:556.0px;top:0.0px;width:1.0px;height:17.0px;background:#b4b4b4;"></div>
<div class="a" style="left:669.0px;top:0.0px;width:1.0px;height:17.0px;background:#b4b4b4;"></div>
<div class="a" style="left:808.0px;top:0.0px;width:1.0px;height:17.0px;background:#b4b4b4;"></div>
<div class="a" style="left:880.0px;top:0.0px;width:1.0px;height:17.0px;background:#b4b4b4;"></div>
<div class="a" style="left:1005.0px;top:0.0px;width:1.0px;height:17.0px;background:#b4b4b4;"></div>
<div class="a" style="left:1049.0px;top:0.0px;width:1.0px;height:17.0px;background:#b4b4b4;"></div>
<div class="a" style="left:1142.0px;top:0.0px;width:1.0px;height:17.0px;background:#b4b4b4;"></div>
<div class="a" style="left:1243.0px;top:0.0px;width:1.0px;height:17.0px;background:#b4b4b4;"></div>
<div class="a" style="left:1310.0px;top:0.0px;width:1.0px;height:17.0px;background:#b4b4b4;"></div>
<div class="a" style="left:1510.0px;top:0.0px;width:1.0px;height:17.0px;background:#b4b4b4;"></div>
<div class="a" style="left:1667.0px;top:0.0px;width:1.0px;height:17.0px;background:#b4b4b4;"></div>
<div class="a" style="left:0.0px;top:17.0px;width:41.0px;height:614.0px;background:#e4e6ea;border-right:1px solid #a9a9a9;box-sizing:border-box;"></div>
<div class="a" style="left:0.0px;top:32.7px;width:41.0px;height:15.7px;background:linear-gradient(#f9d88c,#f5c45c);"></div>
<div class="a" style="left:0.0px;top:17.0px;width:41.0px;height:1.0px;background:#bdbdbd;"></div>
<div class="a" style="left:0.0px;top:32.7px;width:41.0px;height:1.0px;background:#bdbdbd;"></div>
<div class="a" style="left:0.0px;top:48.4px;width:41.0px;height:1.0px;background:#bdbdbd;"></div>
<div class="a" style="left:0.0px;top:64.1px;width:41.0px;height:1.0px;background:#bdbdbd;"></div>
<div class="a" style="left:0.0px;top:79.8px;width:41.0px;height:1.0px;background:#bdbdbd;"></div>
<div class="a" style="left:0.0px;top:96.0px;width:41.0px;height:1.0px;background:#bdbdbd;"></div>
<div class="a" style="left:0.0px;top:114.4px;width:41.0px;height:1.0px;background:#bdbdbd;"></div>
<div class="a" style="left:0.0px;top:131.0px;width:41.0px;height:1.0px;background:#bdbdbd;"></div>
<div class="a" style="left:0.0px;top:150.7px;width:41.0px;height:1.0px;background:#bdbdbd;"></div>
<div class="a" style="left:0.0px;top:167.3px;width:41.0px;height:1.0px;background:#bdbdbd;"></div>
<div class="a" style="left:0.0px;top:183.1px;width:41.0px;height:1.0px;background:#bdbdbd;"></div>
<div class="a" style="left:0.0px;top:198.8px;width:41.0px;height:1.0px;background:#bdbdbd;"></div>
<div class="a" style="left:0.0px;top:214.4px;width:41.0px;height:1.0px;background:#bdbdbd;"></div>
<div class="a" style="left:0.0px;top:230.1px;width:41.0px;height:1.0px;background:#bdbdbd;"></div>
<div class="a" style="left:0.0px;top:245.8px;width:41.0px;height:1.0px;background:#bdbdbd;"></div>
<div class="a" style="left:0.0px;top:261.4px;width:41.0px;height:1.0px;background:#bdbdbd;"></div>
<div class="a" style="left:0.0px;top:277.0px;width:41.0px;height:1.0px;background:#bdbdbd;"></div>
<div class="a" style="left:0.0px;top:292.7px;width:41.0px;height:1.0px;background:#bdbdbd;"></div>
<div class="a" style="left:0.0px;top:308.4px;width:41.0px;height:1.0px;background:#bdbdbd;"></div>
<div class="a" style="left:0.0px;top:324.0px;width:41.0px;height:1.0px;background:#bdbdbd;"></div>
<div class="a" style="left:0.0px;top:339.6px;width:41.0px;height:1.0px;background:#bdbdbd;"></div>
<div class="a" style="left:0.0px;top:355.3px;width:41.0px;height:1.0px;background:#bdbdbd;"></div>
<div class="a" style="left:0.0px;top:371.0px;width:41.0px;height:1.0px;background:#bdbdbd;"></div>
<div class="a" style="left:0.0px;top:386.6px;width:41.0px;height:1.0px;background:#bdbdbd;"></div>
<div class="a" style="left:0.0px;top:402.2px;width:41.0px;height:1.0px;background:#bdbdbd;"></div>
<div class="a" style="left:0.0px;top:417.9px;width:41.0px;height:1.0px;background:#bdbdbd;"></div>
<div class="a" style="left:0.0px;top:433.5px;width:41.0px;height:1.0px;background:#bdbdbd;"></div>
<div class="a" style="left:0.0px;top:449.2px;width:41.0px;height:1.0px;background:#bdbdbd;"></div>
<div class="a" style="left:0.0px;top:464.9px;width:41.0px;height:1.0px;background:#bdbdbd;"></div>
<div class="a" style="left:0.0px;top:480.5px;width:41.0px;height:1.0px;background:#bdbdbd;"></div>
<div class="a" style="left:0.0px;top:496.2px;width:41.0px;height:1.0px;background:#bdbdbd;"></div>
<div class="a" style="left:0.0px;top:511.8px;width:41.0px;height:1.0px;background:#bdbdbd;"></div>
<div class="a" style="left:0.0px;top:527.5px;width:41.0px;height:1.0px;background:#bdbdbd;"></div>
<div class="a" style="left:0.0px;top:543.1px;width:41.0px;height:1.0px;background:#bdbdbd;"></div>
<div class="a" style="left:0.0px;top:558.8px;width:41.0px;height:1.0px;background:#bdbdbd;"></div>
<div class="a" style="left:0.0px;top:574.4px;width:41.0px;height:1.0px;background:#bdbdbd;"></div>
<div class="a" style="left:0.0px;top:590.0px;width:41.0px;height:1.0px;background:#bdbdbd;"></div>
<div class="a" style="left:0.0px;top:605.7px;width:41.0px;height:1.0px;background:#bdbdbd;"></div>
<div class="a" style="left:0.0px;top:621.4px;width:41.0px;height:1.0px;background:#bdbdbd;"></div>
<div class="a" style="left:0.0px;top:637.0px;width:41.0px;height:1.0px;background:#bdbdbd;"></div>
<div class="a" style="left:42.0px;top:17.0px;width:1201.0px;height:13.7px;background:#6af8f8;"></div>
<div class="a" style="left:42.0px;top:30.7px;width:1201.0px;height:2.0px;background:#fff;"></div>
<div class="a" style="left:314.0px;top:30.1px;width:929.0px;height:3.0px;background:#000;"></div>
<div class="a" style="left:42.0px;top:32.7px;width:1201.0px;height:385.2px;background:#ffff99;"></div>
<div class="a" style="left:43.0px;top:31.7px;width:270.0px;height:2.5px;background:#fff;"></div>
<div class="a" style="left:111.0px;top:195.2px;width:321.0px;height:1.1px;background:rgba(150,150,150,0.75);"></div>
<div class="a" style="left:276.0px;top:87.0px;width:39.0px;height:1.0px;background:rgba(255,255,255,0.35);"></div>
<div class="a" style="left:276.0px;top:87.0px;width:1.0px;height:36.0px;background:rgba(255,255,255,0.35);"></div>
<div class="a" style="left:276.0px;top:122.0px;width:39.0px;height:1.0px;background:rgba(255,255,255,0.35);"></div>
<span class="t" style="left:445.6px;top:156.3px;font-size:106px;line-height:106px;color:#858585;-webkit-text-stroke:2.6px #858585;transform-origin:0 0;transform:scaleX(1.17);">P</span>
<span class="t" style="left:530.0px;top:156.3px;font-size:106px;line-height:106px;color:#858585;-webkit-text-stroke:2.6px #858585;transform-origin:0 0;transform:scaleX(1.00);">a</span>
<span class="t" style="left:600.3px;top:156.3px;font-size:106px;line-height:106px;color:#858585;-webkit-text-stroke:2.6px #858585;transform-origin:0 0;transform:scaleX(0.93);">g</span>
<span class="t" style="left:654.5px;top:156.3px;font-size:106px;line-height:106px;color:#858585;-webkit-text-stroke:2.6px #858585;transform-origin:0 0;transform:scaleX(1.12);">e</span>
<svg style="left:781.0px;top:169.5px" width="40" height="80" viewBox="0 0 40 80"><path d="M36 0 L36 77 L22.5 77 L22.5 20 C17 26 9 31 1 34 L1 21.5 C13 16 22 8 26.5 0 Z" fill="#858585"/></svg>
<div class="a" style="left:313.9px;top:17.0px;width:1.7px;height:614.0px;background:#111;"></div>
<div class="a" style="left:431.9px;top:17.0px;width:1.7px;height:614.0px;background:#111;"></div>
<div class="a" style="left:555.9px;top:17.0px;width:1.7px;height:614.0px;background:#111;"></div>
<div class="a" style="left:668.9px;top:17.0px;width:1.7px;height:614.0px;background:#111;"></div>
<div class="a" style="left:807.9px;top:17.0px;width:1.7px;height:614.0px;background:#111;"></div>
<div class="a" style="left:879.9px;top:17.0px;width:1.7px;height:614.0px;background:#111;"></div>
<div class="a" style="left:1004.9px;top:17.0px;width:1.7px;height:614.0px;background:#111;"></div>
<div class="a" style="left:1048.9px;top:17.0px;width:1.7px;height:614.0px;background:#111;"></div>
<div class="a" style="left:1141.9px;top:17.0px;width:1.7px;height:614.0px;background:#111;"></div>
<div class="a" style="left:312.2px;top:18.5px;width:3.3px;height:14.2px;background:#000;"></div>
<div class="a" style="left:430.2px;top:18.5px;width:3.3px;height:14.2px;background:#000;"></div>
<div class="a" style="left:554.2px;top:18.5px;width:3.3px;height:14.2px;background:#000;"></div>
<div class="a" style="left:667.2px;top:18.5px;width:3.3px;height:14.2px;background:#000;"></div>
<div class="a" style="left:806.2px;top:18.5px;width:3.3px;height:14.2px;background:#000;"></div>
<div class="a" style="left:878.2px;top:18.5px;width:3.3px;height:14.2px;background:#000;"></div>
<div class="a" style="left:1003.2px;top:18.5px;width:3.3px;height:14.2px;background:#000;"></div>
<div class="a" style="left:1047.2px;top:18.5px;width:3.3px;height:14.2px;background:#000;"></div>
<div class="a" style="left:1140.2px;top:18.5px;width:3.3px;height:14.2px;background:#000;"></div>
<div class="a" style="left:1240.0px;top:419.2px;width:3.7px;height:211.8px;background:#0a0a0a;"></div>
<span class="t" style="left:47.0px;top:35.2px;font-size:12px;line-height:12px;color:#111;transform-origin:0 0;transform:scaleX(1.200);-webkit-text-stroke:0.60px #111;">Active Professional Computers</span>
<span class="t" style="left:319.0px;top:35.2px;font-size:12px;line-height:12px;color:#111;transform-origin:0 0;transform:scaleX(1.200);-webkit-text-stroke:0.60px #111;">00001</span>
<span class="t" style="left:437.0px;top:35.2px;font-size:12px;line-height:12px;color:#111;transform-origin:0 0;transform:scaleX(1.200);-webkit-text-stroke:0.60px #111;">A00172</span>
<span class="t" style="left:600.9px;top:35.2px;font-size:12px;line-height:12px;color:#111;transform-origin:0 0;transform:scaleX(1.200);-webkit-text-stroke:0.60px #111;">2/24/2006</span>
<span class="t" style="left:674.0px;top:35.2px;font-size:12px;line-height:12px;color:#111;transform-origin:0 0;transform:scaleX(1.200);-webkit-text-stroke:0.60px #111;">PBUFF256</span>
<span class="t" style="left:840.0px;top:35.2px;font-size:12px;line-height:12px;color:#111;transform-origin:0 0;transform:scaleX(1.200);-webkit-text-stroke:0.60px #111;">$1.23</span>
<span class="t" style="left:968.2px;top:35.2px;font-size:12px;line-height:12px;color:#111;transform-origin:0 0;transform:scaleX(1.200);-webkit-text-stroke:0.60px #111;">0.0%</span>
<span class="t" style="left:1037.0px;top:35.2px;font-size:12px;line-height:12px;color:#111;transform-origin:0 0;transform:scaleX(1.200);-webkit-text-stroke:0.60px #111;">4</span>
<span class="t" style="left:1054.0px;top:35.2px;font-size:12px;line-height:12px;color:#111;transform-origin:0 0;transform:scaleX(1.200);-webkit-text-stroke:0.60px #111;">Mail</span>
<span class="t" style="left:1203.0px;top:35.2px;font-size:12px;line-height:12px;color:#111;transform-origin:0 0;transform:scaleX(1.200);-webkit-text-stroke:0.60px #111;">$4.92</span>
<svg style="left:315.0px;top:33.2px" width="10" height="8" viewBox="0 0 10 8"><path d="M0 0 L9.5 0 L0 7.5 Z" fill="#2c8a2c"/></svg>
<span class="t" style="left:47.0px;top:50.9px;font-size:12px;line-height:12px;color:#111;transform-origin:0 0;transform:scaleX(1.200);-webkit-text-stroke:0.60px #111;">Active Professional Computers</span>
<span class="t" style="left:319.0px;top:50.9px;font-size:12px;line-height:12px;color:#111;transform-origin:0 0;transform:scaleX(1.200);-webkit-text-stroke:0.60px #111;">00001</span>
<span class="t" style="left:437.0px;top:50.9px;font-size:12px;line-height:12px;color:#111;transform-origin:0 0;transform:scaleX(1.200);-webkit-text-stroke:0.60px #111;">A00011</span>
<span class="t" style="left:592.9px;top:50.9px;font-size:12px;line-height:12px;color:#111;transform-origin:0 0;transform:scaleX(1.200);-webkit-text-stroke:0.60px #111;">12/31/2005</span>
<span class="t" style="left:674.0px;top:50.9px;font-size:12px;line-height:12px;color:#111;transform-origin:0 0;transform:scaleX(1.200);-webkit-text-stroke:0.60px #111;">ENC8</span>
<span class="t" style="left:832.0px;top:50.9px;font-size:12px;line-height:12px;color:#111;transform-origin:0 0;transform:scaleX(1.200);-webkit-text-stroke:0.60px #111;">$90.99</span>
<span class="t" style="left:960.2px;top:50.9px;font-size:12px;line-height:12px;color:#111;transform-origin:0 0;transform:scaleX(1.200);-webkit-text-stroke:0.60px #111;">19.0%</span>
<span class="t" style="left:1037.0px;top:50.9px;font-size:12px;line-height:12px;color:#111;transform-origin:0 0;transform:scaleX(1.200);-webkit-text-stroke:0.60px #111;">3</span>
<span class="t" style="left:1054.0px;top:50.9px;font-size:12px;line-height:12px;color:#111;transform-origin:0 0;transform:scaleX(1.200);-webkit-text-stroke:0.60px #111;">Courier</span>
<span class="t" style="left:1186.9px;top:50.9px;font-size:12px;line-height:12px;color:#111;transform-origin:0 0;transform:scaleX(1.200);-webkit-text-stroke:0.60px #111;">$324.83</span>
<svg style="left:315.0px;top:48.9px" width="10" height="8" viewBox="0 0 10 8"><path d="M0 0 L9.5 0 L0 7.5 Z" fill="#2c8a2c"/></svg>
<span class="t" style="left:47.0px;top:66.6px;font-size:12px;line-height:12px;color:#111;transform-origin:0 0;transform:scaleX(1.200);-webkit-text-stroke:0.60px #111;">Allied Cleaners</span>
<span class="t" style="left:319.0px;top:66.6px;font-size:12px;line-height:12px;color:#111;transform-origin:0 0;transform:scaleX(1.200);-webkit-text-stroke:0.60px #111;">00003</span>
<span class="t" style="left:437.0px;top:66.6px;font-size:12px;line-height:12px;color:#111;transform-origin:0 0;transform:scaleX(1.200);-webkit-text-stroke:0.60px #111;">A00099</span>
<span class="t" style="left:600.9px;top:66.6px;font-size:12px;line-height:12px;color:#111;transform-origin:0 0;transform:scaleX(1.200);-webkit-text-stroke:0.60px #111;">1/10/2006</span>
<span class="t" style="left:674.0px;top:66.6px;font-size:12px;line-height:12px;color:#111;transform-origin:0 0;transform:scaleX(1.200);-webkit-text-stroke:0.60px #111;">HD200</span>
<span class="t" style="left:823.9px;top:66.6px;font-size:12px;line-height:12px;color:#111;transform-origin:0 0;transform:scaleX(1.200);-webkit-text-stroke:0.60px #111;">$204.35</span>
<span class="t" style="left:960.2px;top:66.6px;font-size:12px;line-height:12px;color:#111;transform-origin:0 0;transform:scaleX(1.200);-webkit-text-stroke:0.60px #111;">19.0%</span>
<span class="t" style="left:1037.0px;top:66.6px;font-size:12px;line-height:12px;color:#111;transform-origin:0 0;transform:scaleX(1.200);-webkit-text-stroke:0.60px #111;">7</span>
<span class="t" style="left:1054.0px;top:66.6px;font-size:12px;line-height:12px;color:#111;transform-origin:0 0;transform:scaleX(1.200);-webkit-text-stroke:0.60px #111;">Mail</span>
<span class="t" style="left:1174.9px;top:66.6px;font-size:12px;line-height:12px;color:#111;transform-origin:0 0;transform:scaleX(1.200);-webkit-text-stroke:0.60px #111;">$1,702.24</span>
<svg style="left:315.0px;top:64.6px" width="10" height="8" viewBox="0 0 10 8"><path d="M0 0 L9.5 0 L0 7.5 Z" fill="#2c8a2c"/></svg>
<span class="t" style="left:47.0px;top:82.1px;font-size:12px;line-height:12px;color:#111;transform-origin:0 0;transform:scaleX(1.200);-webkit-text-stroke:0.60px #111;">The Arcades Amusement Park</span>
<span class="t" style="left:319.0px;top:82.1px;font-size:12px;line-height:12px;color:#111;transform-origin:0 0;transform:scaleX(1.200);-webkit-text-stroke:0.60px #111;">00005</span>
<span class="t" style="left:437.0px;top:82.1px;font-size:12px;line-height:12px;color:#111;transform-origin:0 0;transform:scaleX(1.200);-webkit-text-stroke:0.60px #111;">A00093</span>
<span class="t" style="left:602.0px;top:82.1px;font-size:12px;line-height:12px;color:#111;transform-origin:0 0;transform:scaleX(1.200);-webkit-text-stroke:0.60px #111;">1/11/2006</span>
<span class="t" style="left:674.0px;top:82.1px;font-size:12px;line-height:12px;color:#111;transform-origin:0 0;transform:scaleX(1.200);-webkit-text-stroke:0.60px #111;">HD200</span>
<span class="t" style="left:823.9px;top:82.1px;font-size:12px;line-height:12px;color:#111;transform-origin:0 0;transform:scaleX(1.200);-webkit-text-stroke:0.60px #111;">$204.35</span>
<span class="t" style="left:960.2px;top:82.1px;font-size:12px;line-height:12px;color:#111;transform-origin:0 0;transform:scaleX(1.200);-webkit-text-stroke:0.60px #111;">19.0%</span>
<span class="t" style="left:1037.0px;top:82.1px;font-size:12px;line-height:12px;color:#111;transform-origin:0 0;transform:scaleX(1.200);-webkit-text-stroke:0.60px #111;">5</span>
<span class="t" style="left:1054.0px;top:82.1px;font-size:12px;line-height:12px;color:#111;transform-origin:0 0;transform:scaleX(1.200);-webkit-text-stroke:0.60px #111;">Express</span>
<span class="t" style="left:1174.9px;top:82.1px;font-size:12px;line-height:12px;color:#111;transform-origin:0 0;transform:scaleX(1.200);-webkit-text-stroke:0.60px #111;">$1,215.88</span>
<svg style="left:315.0px;top:80.3px" width="10" height="8" viewBox="0 0 10 8"><path d="M0 0 L9.5 0 L0 7.5 Z" fill="#2c8a2c"/></svg>
<span class="t" style="left:47.0px;top:100.8px;font-size:12px;line-height:12px;color:#111;transform-origin:0 0;transform:scaleX(1.200);-webkit-text-stroke:0.60px #111;">Brenner&#x27;s Driving School</span>
<span class="t" style="left:319.0px;top:100.8px;font-size:12px;line-height:12px;color:#111;transform-origin:0 0;transform:scaleX(1.200);-webkit-text-stroke:0.60px #111;">00006</span>
<span class="t" style="left:437.0px;top:100.8px;font-size:12px;line-height:12px;color:#111;transform-origin:0 0;transform:scaleX(1.200);-webkit-text-stroke:0.60px #111;">A00170</span>
<span class="t" style="left:608.9px;top:100.8px;font-size:12px;line-height:12px;color:#111;transform-origin:0 0;transform:scaleX(1.200);-webkit-text-stroke:0.60px #111;">1/5/2006</span>
<span class="t" style="left:674.0px;top:100.8px;font-size:12px;line-height:12px;color:#111;transform-origin:0 0;transform:scaleX(1.200);-webkit-text-stroke:0.60px #111;">FD5.25</span>
<span class="t" style="left:823.9px;top:100.8px;font-size:12px;line-height:12px;color:#111;transform-origin:0 0;transform:scaleX(1.200);-webkit-text-stroke:0.60px #111;">$145.65</span>
<span class="t" style="left:968.2px;top:100.8px;font-size:12px;line-height:12px;color:#111;transform-origin:0 0;transform:scaleX(1.200);-webkit-text-stroke:0.60px #111;">0.0%</span>
<span class="t" style="left:1037.0px;top:100.8px;font-size:12px;line-height:12px;color:#111;transform-origin:0 0;transform:scaleX(1.200);-webkit-text-stroke:0.60px #111;">4</span>
<span class="t" style="left:1054.0px;top:100.8px;font-size:12px;line-height:12px;color:#111;transform-origin:0 0;transform:scaleX(1.200);-webkit-text-stroke:0.60px #111;">Mail</span>
<span class="t" style="left:1186.9px;top:100.8px;font-size:12px;line-height:12px;color:#111;transform-origin:0 0;transform:scaleX(1.200);-webkit-text-stroke:0.60px #111;">$582.60</span>
<svg style="left:315.0px;top:96.5px" width="10" height="8" viewBox="0 0 10 8"><path d="M0 0 L9.5 0 L0 7.5 Z" fill="#2c8a2c"/></svg>
<span class="t" style="left:47.0px;top:118.4px;font-size:12px;line-height:12px;color:#111;transform-origin:0 0;transform:scaleX(1.200);-webkit-text-stroke:0.60px #111;">Brenner&#x27;s Driving School</span>
<span class="t" style="left:319.0px;top:118.4px;font-size:12px;line-height:12px;color:#111;transform-origin:0 0;transform:scaleX(1.200);-webkit-text-stroke:0.60px #111;">00006</span>
<span class="t" style="left:437.0px;top:118.4px;font-size:12px;line-height:12px;color:#111;transform-origin:0 0;transform:scaleX(1.200);-webkit-text-stroke:0.60px #111;">A00179</span>
<span class="t" style="left:592.9px;top:118.4px;font-size:12px;line-height:12px;color:#111;transform-origin:0 0;transform:scaleX(1.200);-webkit-text-stroke:0.60px #111;">12/25/2005</span>
<span class="t" style="left:674.0px;top:118.4px;font-size:12px;line-height:12px;color:#111;transform-origin:0 0;transform:scaleX(1.200);-webkit-text-stroke:0.60px #111;">CVGA</span>
<span class="t" style="left:823.9px;top:118.4px;font-size:12px;line-height:12px;color:#111;transform-origin:0 0;transform:scaleX(1.200);-webkit-text-stroke:0.60px #111;">$300.45</span>
<span class="t" style="left:960.2px;top:118.4px;font-size:12px;line-height:12px;color:#111;transform-origin:0 0;transform:scaleX(1.200);-webkit-text-stroke:0.60px #111;">19.0%</span>
<span class="t" style="left:1029.0px;top:118.4px;font-size:12px;line-height:12px;color:#111;transform-origin:0 0;transform:scaleX(1.200);-webkit-text-stroke:0.60px #111;">10</span>
<span class="t" style="left:1054.0px;top:118.4px;font-size:12px;line-height:12px;color:#111;transform-origin:0 0;transform:scaleX(1.200);-webkit-text-stroke:0.60px #111;">Courier</span>
<span class="t" style="left:1174.9px;top:118.4px;font-size:12px;line-height:12px;color:#111;transform-origin:0 0;transform:scaleX(1.200);-webkit-text-stroke:0.60px #111;">$3,575.36</span>
<svg style="left:315.0px;top:114.9px" width="10" height="8" viewBox="0 0 10 8"><path d="M0 0 L9.5 0 L0 7.5 Z" fill="#2c8a2c"/></svg>
<span class="t" style="left:47.0px;top:137.1px;font-size:12px;line-height:12px;color:#111;transform-origin:0 0;transform:scaleX(1.200);-webkit-text-stroke:0.60px #111;">Brenner&#x27;s Driving School</span>
<span class="t" style="left:319.0px;top:137.1px;font-size:12px;line-height:12px;color:#111;transform-origin:0 0;transform:scaleX(1.200);-webkit-text-stroke:0.60px #111;">00006</span>
<span class="t" style="left:437.0px;top:137.1px;font-size:12px;line-height:12px;color:#111;transform-origin:0 0;transform:scaleX(1.200);-webkit-text-stroke:0.60px #111;">A00006</span>
<span class="t" style="left:608.9px;top:137.1px;font-size:12px;line-height:12px;color:#111;transform-origin:0 0;transform:scaleX(1.200);-webkit-text-stroke:0.60px #111;">2/5/2006</span>
<span class="t" style="left:674.0px;top:137.1px;font-size:12px;line-height:12px;color:#111;transform-origin:0 0;transform:scaleX(1.200);-webkit-text-stroke:0.60px #111;">MAT9</span>
<span class="t" style="left:823.9px;top:137.1px;font-size:12px;line-height:12px;color:#111;transform-origin:0 0;transform:scaleX(1.200);-webkit-text-stroke:0.60px #111;">$100.43</span>
<span class="t" style="left:960.2px;top:137.1px;font-size:12px;line-height:12px;color:#111;transform-origin:0 0;transform:scaleX(1.200);-webkit-text-stroke:0.60px #111;">19.0%</span>
<span class="t" style="left:1037.0px;top:137.1px;font-size:12px;line-height:12px;color:#111;transform-origin:0 0;transform:scaleX(1.200);-webkit-text-stroke:0.60px #111;">9</span>
<span class="t" style="left:1054.0px;top:137.1px;font-size:12px;line-height:12px;color:#111;transform-origin:0 0;transform:scaleX(1.200);-webkit-text-stroke:0.60px #111;">Courier</span>
<span class="t" style="left:1174.9px;top:137.1px;font-size:12px;line-height:12px;color:#111;transform-origin:0 0;transform:scaleX(1.200);-webkit-text-stroke:0.60px #111;">$1,075.61</span>
<svg style="left:315.0px;top:131.5px" width="10" height="8" viewBox="0 0 10 8"><path d="M0 0 L9.5 0 L0 7.5 Z" fill="#2c8a2c"/></svg>
<span class="t" style="left:47.0px;top:154.1px;font-size:12px;line-height:12px;color:#111;transform-origin:0 0;transform:scaleX(1.200);-webkit-text-stroke:0.60px #111;">Brenner&#x27;s Driving School</span>
<span class="t" style="left:319.0px;top:154.1px;font-size:12px;line-height:12px;color:#111;transform-origin:0 0;transform:scaleX(1.200);-webkit-text-stroke:0.60px #111;">00006</span>
<span class="t" style="left:437.0px;top:154.1px;font-size:12px;line-height:12px;color:#111;transform-origin:0 0;transform:scaleX(1.200);-webkit-text-stroke:0.60px #111;">A00058</span>
<span class="t" style="left:600.9px;top:154.1px;font-size:12px;line-height:12px;color:#111;transform-origin:0 0;transform:scaleX(1.200);-webkit-text-stroke:0.60px #111;">1/19/2006</span>
<span class="t" style="left:674.0px;top:154.1px;font-size:12px;line-height:12px;color:#111;transform-origin:0 0;transform:scaleX(1.200);-webkit-text-stroke:0.60px #111;">HD500</span>
<span class="t" style="left:823.9px;top:154.1px;font-size:12px;line-height:12px;color:#111;transform-origin:0 0;transform:scaleX(1.200);-webkit-text-stroke:0.60px #111;">$312.34</span>
<span class="t" style="left:960.2px;top:154.1px;font-size:12px;line-height:12px;color:#111;transform-origin:0 0;transform:scaleX(1.200);-webkit-text-stroke:0.60px #111;">19.0%</span>
<span class="t" style="left:1037.0px;top:154.1px;font-size:12px;line-height:12px;color:#111;transform-origin:0 0;transform:scaleX(1.200);-webkit-text-stroke:0.60px #111;">9</span>
<span class="t" style="left:1054.0px;top:154.1px;font-size:12px;line-height:12px;color:#111;transform-origin:0 0;transform:scaleX(1.200);-webkit-text-stroke:0.60px #111;">Express</span>
<span class="t" style="left:1174.9px;top:154.1px;font-size:12px;line-height:12px;color:#111;transform-origin:0 0;transform:scaleX(1.200);-webkit-text-stroke:0.60px #111;">$3,345.16</span>
<svg style="left:315.0px;top:151.2px" width="10" height="8" viewBox="0 0 10 8"><path d="M0 0 L9.5 0 L0 7.5 Z" fill="#2c8a2c"/></svg>
<span class="t" style="left:47.0px;top:170.0px;font-size:12px;line-height:12px;color:#111;transform-origin:0 0;transform:scaleX(1.200);-webkit-text-stroke:0.60px #111;">AZ Temps</span>
<span class="t" style="left:319.0px;top:170.0px;font-size:12px;line-height:12px;color:#111;transform-origin:0 0;transform:scaleX(1.200);-webkit-text-stroke:0.60px #111;">00007</span>
<span class="t" style="left:437.0px;top:170.0px;font-size:12px;line-height:12px;color:#111;transform-origin:0 0;transform:scaleX(1.200);-webkit-text-stroke:0.60px #111;">A00100</span>
<span class="t" style="left:600.9px;top:170.0px;font-size:12px;line-height:12px;color:#111;transform-origin:0 0;transform:scaleX(1.200);-webkit-text-stroke:0.60px #111;">2/27/2006</span>
<span class="t" style="left:674.0px;top:170.0px;font-size:12px;line-height:12px;color:#111;transform-origin:0 0;transform:scaleX(1.200);-webkit-text-stroke:0.60px #111;">PBUFF512</span>
<span class="t" style="left:840.0px;top:170.0px;font-size:12px;line-height:12px;color:#111;transform-origin:0 0;transform:scaleX(1.200);-webkit-text-stroke:0.60px #111;">$3.45</span>
<span class="t" style="left:960.2px;top:170.0px;font-size:12px;line-height:12px;color:#111;transform-origin:0 0;transform:scaleX(1.200);-webkit-text-stroke:0.60px #111;">19.0%</span>
<span class="t" style="left:1037.0px;top:170.0px;font-size:12px;line-height:12px;color:#111;transform-origin:0 0;transform:scaleX(1.200);-webkit-text-stroke:0.60px #111;">2</span>
<span class="t" style="left:1054.0px;top:170.0px;font-size:12px;line-height:12px;color:#111;transform-origin:0 0;transform:scaleX(1.200);-webkit-text-stroke:0.60px #111;">Courier</span>
<span class="t" style="left:1203.0px;top:170.0px;font-size:12px;line-height:12px;color:#111;transform-origin:0 0;transform:scaleX(1.200);-webkit-text-stroke:0.60px #111;">$8.21</span>
<svg style="left:315.0px;top:167.8px" width="10" height="8" viewBox="0 0 10 8"><path d="M0 0 L9.5 0 L0 7.5 Z" fill="#2c8a2c"/></svg>
<span class="t" style="left:47.0px;top:185.6px;font-size:12px;line-height:12px;color:#111;transform-origin:0 0;transform:scaleX(1.200);-webkit-text-stroke:0.60px #111;">AZ Temps</span>
<span class="t" style="left:319.0px;top:185.6px;font-size:12px;line-height:12px;color:#111;transform-origin:0 0;transform:scaleX(1.200);-webkit-text-stroke:0.60px #111;">00007</span>
<span class="t" style="left:437.0px;top:185.6px;font-size:12px;line-height:12px;color:#111;transform-origin:0 0;transform:scaleX(1.200);-webkit-text-stroke:0.60px #111;">A00176</span>
<span class="t" style="left:608.9px;top:185.6px;font-size:12px;line-height:12px;color:#111;transform-origin:0 0;transform:scaleX(1.200);-webkit-text-stroke:0.60px #111;">2/9/2006</span>
<span class="t" style="left:674.0px;top:185.6px;font-size:12px;line-height:12px;color:#111;transform-origin:0 0;transform:scaleX(1.200);-webkit-text-stroke:0.60px #111;">MONO12</span>
<span class="t" style="left:832.0px;top:185.6px;font-size:12px;line-height:12px;color:#111;transform-origin:0 0;transform:scaleX(1.200);-webkit-text-stroke:0.60px #111;">$45.60</span>
<span class="t" style="left:960.2px;top:185.6px;font-size:12px;line-height:12px;color:#111;transform-origin:0 0;transform:scaleX(1.200);-webkit-text-stroke:0.60px #111;">19.0%</span>
<span class="t" style="left:1037.0px;top:185.6px;font-size:12px;line-height:12px;color:#111;transform-origin:0 0;transform:scaleX(1.200);-webkit-text-stroke:0.60px #111;">7</span>
<span class="t" style="left:1054.0px;top:185.6px;font-size:12px;line-height:12px;color:#111;transform-origin:0 0;transform:scaleX(1.200);-webkit-text-stroke:0.60px #111;">Express</span>
<span class="t" style="left:1186.9px;top:185.6px;font-size:12px;line-height:12px;color:#111;transform-origin:0 0;transform:scaleX(1.200);-webkit-text-stroke:0.60px #111;">$379.85</span>
<svg style="left:315.0px;top:183.6px" width="10" height="8" viewBox="0 0 10 8"><path d="M0 0 L9.5 0 L0 7.5 Z" fill="#2c8a2c"/></svg>
<span class="t" style="left:47.0px;top:201.3px;font-size:12px;line-height:12px;color:#111;transform-origin:0 0;transform:scaleX(1.200);-webkit-text-stroke:0.60px #111;">AZ Temps</span>
<span class="t" style="left:319.0px;top:201.3px;font-size:12px;line-height:12px;color:#111;transform-origin:0 0;transform:scaleX(1.200);-webkit-text-stroke:0.60px #111;">00007</span>
<span class="t" style="left:437.0px;top:201.3px;font-size:12px;line-height:12px;color:#111;transform-origin:0 0;transform:scaleX(1.200);-webkit-text-stroke:0.60px #111;">A00117</span>
<span class="t" style="left:600.9px;top:201.3px;font-size:12px;line-height:12px;color:#111;transform-origin:0 0;transform:scaleX(1.200);-webkit-text-stroke:0.60px #111;">2/27/2006</span>
<span class="t" style="left:674.0px;top:201.3px;font-size:12px;line-height:12px;color:#111;transform-origin:0 0;transform:scaleX(1.200);-webkit-text-stroke:0.60px #111;">PBUFF512</span>
<span class="t" style="left:840.0px;top:201.3px;font-size:12px;line-height:12px;color:#111;transform-origin:0 0;transform:scaleX(1.200);-webkit-text-stroke:0.60px #111;">$3.45</span>
<span class="t" style="left:960.2px;top:201.3px;font-size:12px;line-height:12px;color:#111;transform-origin:0 0;transform:scaleX(1.200);-webkit-text-stroke:0.60px #111;">19.0%</span>
<span class="t" style="left:1037.0px;top:201.3px;font-size:12px;line-height:12px;color:#111;transform-origin:0 0;transform:scaleX(1.200);-webkit-text-stroke:0.60px #111;">2</span>
<span class="t" style="left:1054.0px;top:201.3px;font-size:12px;line-height:12px;color:#111;transform-origin:0 0;transform:scaleX(1.200);-webkit-text-stroke:0.60px #111;">Express</span>
<span class="t" style="left:1203.0px;top:201.3px;font-size:12px;line-height:12px;color:#111;transform-origin:0 0;transform:scaleX(1.200);-webkit-text-stroke:0.60px #111;">$8.21</span>
<svg style="left:315.0px;top:199.3px" width="10" height="8" viewBox="0 0 10 8"><path d="M0 0 L9.5 0 L0 7.5 Z" fill="#2c8a2c"/></svg>
<span class="t" style="left:47.0px;top:216.9px;font-size:12px;line-height:12px;color:#111;transform-origin:0 0;transform:scaleX(1.200);-webkit-text-stroke:0.60px #111;">Bernard&#x27;s Antiques Shop</span>
<span class="t" style="left:319.0px;top:216.9px;font-size:12px;line-height:12px;color:#111;transform-origin:0 0;transform:scaleX(1.200);-webkit-text-stroke:0.60px #111;">00008</span>
<span class="t" style="left:437.0px;top:216.9px;font-size:12px;line-height:12px;color:#111;transform-origin:0 0;transform:scaleX(1.200);-webkit-text-stroke:0.60px #111;">A00168</span>
<span class="t" style="left:600.9px;top:216.9px;font-size:12px;line-height:12px;color:#111;transform-origin:0 0;transform:scaleX(1.200);-webkit-text-stroke:0.60px #111;">1/27/2006</span>
<span class="t" style="left:674.0px;top:216.9px;font-size:12px;line-height:12px;color:#111;transform-origin:0 0;transform:scaleX(1.200);-webkit-text-stroke:0.60px #111;">M14VGA</span>
<span class="t" style="left:823.9px;top:216.9px;font-size:12px;line-height:12px;color:#111;transform-origin:0 0;transform:scaleX(1.200);-webkit-text-stroke:0.60px #111;">$200.67</span>
<span class="t" style="left:960.2px;top:216.9px;font-size:12px;line-height:12px;color:#111;transform-origin:0 0;transform:scaleX(1.200);-webkit-text-stroke:0.60px #111;">19.0%</span>
<span class="t" style="left:1037.0px;top:216.9px;font-size:12px;line-height:12px;color:#111;transform-origin:0 0;transform:scaleX(1.200);-webkit-text-stroke:0.60px #111;">1</span>
<span class="t" style="left:1054.0px;top:216.9px;font-size:12px;line-height:12px;color:#111;transform-origin:0 0;transform:scaleX(1.200);-webkit-text-stroke:0.60px #111;">Mail</span>
<span class="t" style="left:1186.9px;top:216.9px;font-size:12px;line-height:12px;color:#111;transform-origin:0 0;transform:scaleX(1.200);-webkit-text-stroke:0.60px #111;">$238.80</span>
<svg style="left:315.0px;top:214.9px" width="10" height="8" viewBox="0 0 10 8"><path d="M0 0 L9.5 0 L0 7.5 Z" fill="#2c8a2c"/></svg>
<span class="t" style="left:47.0px;top:232.6px;font-size:12px;line-height:12px;color:#111;transform-origin:0 0;transform:scaleX(1.200);-webkit-text-stroke:0.60px #111;">Bernard&#x27;s Antiques Shop</span>
<span class="t" style="left:319.0px;top:232.6px;font-size:12px;line-height:12px;color:#111;transform-origin:0 0;transform:scaleX(1.200);-webkit-text-stroke:0.60px #111;">00008</span>
<span class="t" style="left:437.0px;top:232.6px;font-size:12px;line-height:12px;color:#111;transform-origin:0 0;transform:scaleX(1.200);-webkit-text-stroke:0.60px #111;">A00147</span>
<span class="t" style="left:600.9px;top:232.6px;font-size:12px;line-height:12px;color:#111;transform-origin:0 0;transform:scaleX(1.200);-webkit-text-stroke:0.60px #111;">2/22/2006</span>
<span class="t" style="left:674.0px;top:232.6px;font-size:12px;line-height:12px;color:#111;transform-origin:0 0;transform:scaleX(1.200);-webkit-text-stroke:0.60px #111;">PBUFF256</span>
<span class="t" style="left:840.0px;top:232.6px;font-size:12px;line-height:12px;color:#111;transform-origin:0 0;transform:scaleX(1.200);-webkit-text-stroke:0.60px #111;">$1.23</span>
<span class="t" style="left:960.2px;top:232.6px;font-size:12px;line-height:12px;color:#111;transform-origin:0 0;transform:scaleX(1.200);-webkit-text-stroke:0.60px #111;">19.0%</span>
<span class="t" style="left:1037.0px;top:232.6px;font-size:12px;line-height:12px;color:#111;transform-origin:0 0;transform:scaleX(1.200);-webkit-text-stroke:0.60px #111;">6</span>
<span class="t" style="left:1054.0px;top:232.6px;font-size:12px;line-height:12px;color:#111;transform-origin:0 0;transform:scaleX(1.200);-webkit-text-stroke:0.60px #111;">Mail</span>
<span class="t" style="left:1203.0px;top:232.6px;font-size:12px;line-height:12px;color:#111;transform-origin:0 0;transform:scaleX(1.200);-webkit-text-stroke:0.60px #111;">$8.78</span>
<svg style="left:315.0px;top:230.6px" width="10" height="8" viewBox="0 0 10 8"><path d="M0 0 L9.5 0 L0 7.5 Z" fill="#2c8a2c"/></svg>
<span class="t" style="left:47.0px;top:248.2px;font-size:12px;line-height:12px;color:#111;transform-origin:0 0;transform:scaleX(1.200);-webkit-text-stroke:0.60px #111;">Bernard&#x27;s Antiques Shop</span>
<span class="t" style="left:319.0px;top:248.2px;font-size:12px;line-height:12px;color:#111;transform-origin:0 0;transform:scaleX(1.200);-webkit-text-stroke:0.60px #111;">00008</span>
<span class="t" style="left:437.0px;top:248.2px;font-size:12px;line-height:12px;color:#111;transform-origin:0 0;transform:scaleX(1.200);-webkit-text-stroke:0.60px #111;">A00075</span>
<span class="t" style="left:592.9px;top:248.2px;font-size:12px;line-height:12px;color:#111;transform-origin:0 0;transform:scaleX(1.200);-webkit-text-stroke:0.60px #111;">12/22/2005</span>
<span class="t" style="left:674.0px;top:248.2px;font-size:12px;line-height:12px;color:#111;transform-origin:0 0;transform:scaleX(1.200);-webkit-text-stroke:0.60px #111;">CVGA</span>
<span class="t" style="left:823.9px;top:248.2px;font-size:12px;line-height:12px;color:#111;transform-origin:0 0;transform:scaleX(1.200);-webkit-text-stroke:0.60px #111;">$300.45</span>
<span class="t" style="left:960.2px;top:248.2px;font-size:12px;line-height:12px;color:#111;transform-origin:0 0;transform:scaleX(1.200);-webkit-text-stroke:0.60px #111;">19.0%</span>
<span class="t" style="left:1037.0px;top:248.2px;font-size:12px;line-height:12px;color:#111;transform-origin:0 0;transform:scaleX(1.200);-webkit-text-stroke:0.60px #111;">1</span>
<span class="t" style="left:1054.0px;top:248.2px;font-size:12px;line-height:12px;color:#111;transform-origin:0 0;transform:scaleX(1.200);-webkit-text-stroke:0.60px #111;">Express</span>
<span class="t" style="left:1186.9px;top:248.2px;font-size:12px;line-height:12px;color:#111;transform-origin:0 0;transform:scaleX(1.200);-webkit-text-stroke:0.60px #111;">$357.54</span>
<svg style="left:315.0px;top:246.2px" width="10" height="8" viewBox="0 0 10 8"><path d="M0 0 L9.5 0 L0 7.5 Z" fill="#2c8a2c"/></svg>
<span class="t" style="left:47.0px;top:263.9px;font-size:12px;line-height:12px;color:#111;transform-origin:0 0;transform:scaleX(1.200);-webkit-text-stroke:0.60px #111;">Banner Car Parts</span>
<span class="t" style="left:319.0px;top:263.9px;font-size:12px;line-height:12px;color:#111;transform-origin:0 0;transform:scaleX(1.200);-webkit-text-stroke:0.60px #111;">00009</span>
<span class="t" style="left:437.0px;top:263.9px;font-size:12px;line-height:12px;color:#111;transform-origin:0 0;transform:scaleX(1.200);-webkit-text-stroke:0.60px #111;">A00199</span>
<span class="t" style="left:608.9px;top:263.9px;font-size:12px;line-height:12px;color:#111;transform-origin:0 0;transform:scaleX(1.200);-webkit-text-stroke:0.60px #111;">3/4/2006</span>
<span class="t" style="left:674.0px;top:263.9px;font-size:12px;line-height:12px;color:#111;transform-origin:0 0;transform:scaleX(1.200);-webkit-text-stroke:0.60px #111;">PCM386</span>
<span class="t" style="left:811.9px;top:263.9px;font-size:12px;line-height:12px;color:#111;transform-origin:0 0;transform:scaleX(1.200);-webkit-text-stroke:0.60px #111;">$1,435.99</span>
<span class="t" style="left:960.2px;top:263.9px;font-size:12px;line-height:12px;color:#111;transform-origin:0 0;transform:scaleX(1.200);-webkit-text-stroke:0.60px #111;">19.0%</span>
<span class="t" style="left:1037.0px;top:263.9px;font-size:12px;line-height:12px;color:#111;transform-origin:0 0;transform:scaleX(1.200);-webkit-text-stroke:0.60px #111;">1</span>
<span class="t" style="left:1054.0px;top:263.9px;font-size:12px;line-height:12px;color:#111;transform-origin:0 0;transform:scaleX(1.200);-webkit-text-stroke:0.60px #111;">Mail</span>
<span class="t" style="left:1174.9px;top:263.9px;font-size:12px;line-height:12px;color:#111;transform-origin:0 0;transform:scaleX(1.200);-webkit-text-stroke:0.60px #111;">$1,708.83</span>
<svg style="left:315.0px;top:261.9px" width="10" height="8" viewBox="0 0 10 8"><path d="M0 0 L9.5 0 L0 7.5 Z" fill="#2c8a2c"/></svg>
<span class="t" style="left:47.0px;top:279.5px;font-size:12px;line-height:12px;color:#111;transform-origin:0 0;transform:scaleX(1.200);-webkit-text-stroke:0.60px #111;">Banner Car Parts</span>
<span class="t" style="left:319.0px;top:279.5px;font-size:12px;line-height:12px;color:#111;transform-origin:0 0;transform:scaleX(1.200);-webkit-text-stroke:0.60px #111;">00009</span>
<span class="t" style="left:437.0px;top:279.5px;font-size:12px;line-height:12px;color:#111;transform-origin:0 0;transform:scaleX(1.200);-webkit-text-stroke:0.60px #111;">A00078</span>
<span class="t" style="left:608.9px;top:279.5px;font-size:12px;line-height:12px;color:#111;transform-origin:0 0;transform:scaleX(1.200);-webkit-text-stroke:0.60px #111;">1/3/2006</span>
<span class="t" style="left:674.0px;top:279.5px;font-size:12px;line-height:12px;color:#111;transform-origin:0 0;transform:scaleX(1.200);-webkit-text-stroke:0.60px #111;">FD5.25</span>
<span class="t" style="left:823.9px;top:279.5px;font-size:12px;line-height:12px;color:#111;transform-origin:0 0;transform:scaleX(1.200);-webkit-text-stroke:0.60px #111;">$145.65</span>
<span class="t" style="left:968.2px;top:279.5px;font-size:12px;line-height:12px;color:#111;transform-origin:0 0;transform:scaleX(1.200);-webkit-text-stroke:0.60px #111;">0.0%</span>
<span class="t" style="left:1037.0px;top:279.5px;font-size:12px;line-height:12px;color:#111;transform-origin:0 0;transform:scaleX(1.200);-webkit-text-stroke:0.60px #111;">1</span>
<span class="t" style="left:1054.0px;top:279.5px;font-size:12px;line-height:12px;color:#111;transform-origin:0 0;transform:scaleX(1.200);-webkit-text-stroke:0.60px #111;">Mail</span>
<span class="t" style="left:1186.9px;top:279.5px;font-size:12px;line-height:12px;color:#111;transform-origin:0 0;transform:scaleX(1.200);-webkit-text-stroke:0.60px #111;">$145.65</span>
<svg style="left:315.0px;top:277.5px" width="10" height="8" viewBox="0 0 10 8"><path d="M0 0 L9.5 0 L0 7.5 Z" fill="#2c8a2c"/></svg>
<span class="t" style="left:47.0px;top:295.2px;font-size:12px;line-height:12px;color:#111;transform-origin:0 0;transform:scaleX(1.200);-webkit-text-stroke:0.60px #111;">Banner Car Parts</span>
<span class="t" style="left:319.0px;top:295.2px;font-size:12px;line-height:12px;color:#111;transform-origin:0 0;transform:scaleX(1.200);-webkit-text-stroke:0.60px #111;">00009</span>
<span class="t" style="left:437.0px;top:295.2px;font-size:12px;line-height:12px;color:#111;transform-origin:0 0;transform:scaleX(1.200);-webkit-text-stroke:0.60px #111;">A00068</span>
<span class="t" style="left:600.9px;top:295.2px;font-size:12px;line-height:12px;color:#111;transform-origin:0 0;transform:scaleX(1.200);-webkit-text-stroke:0.60px #111;">1/24/2006</span>
<span class="t" style="left:674.0px;top:295.2px;font-size:12px;line-height:12px;color:#111;transform-origin:0 0;transform:scaleX(1.200);-webkit-text-stroke:0.60px #111;">M14EGA</span>
<span class="t" style="left:823.9px;top:295.2px;font-size:12px;line-height:12px;color:#111;transform-origin:0 0;transform:scaleX(1.200);-webkit-text-stroke:0.60px #111;">$123.44</span>
<span class="t" style="left:960.2px;top:295.2px;font-size:12px;line-height:12px;color:#111;transform-origin:0 0;transform:scaleX(1.200);-webkit-text-stroke:0.60px #111;">19.0%</span>
<span class="t" style="left:1037.0px;top:295.2px;font-size:12px;line-height:12px;color:#111;transform-origin:0 0;transform:scaleX(1.200);-webkit-text-stroke:0.60px #111;">3</span>
<span class="t" style="left:1054.0px;top:295.2px;font-size:12px;line-height:12px;color:#111;transform-origin:0 0;transform:scaleX(1.200);-webkit-text-stroke:0.60px #111;">Mail</span>
<span class="t" style="left:1186.9px;top:295.2px;font-size:12px;line-height:12px;color:#111;transform-origin:0 0;transform:scaleX(1.200);-webkit-text-stroke:0.60px #111;">$440.68</span>
<svg style="left:315.0px;top:293.2px" width="10" height="8" viewBox="0 0 10 8"><path d="M0 0 L9.5 0 L0 7.5 Z" fill="#2c8a2c"/></svg>
<span class="t" style="left:47.0px;top:310.8px;font-size:12px;line-height:12px;color:#111;transform-origin:0 0;transform:scaleX(1.200);-webkit-text-stroke:0.60px #111;">Banner Car Parts</span>
<span class="t" style="left:319.0px;top:310.8px;font-size:12px;line-height:12px;color:#111;transform-origin:0 0;transform:scaleX(1.200);-webkit-text-stroke:0.60px #111;">00009</span>
<span class="t" style="left:437.0px;top:310.8px;font-size:12px;line-height:12px;color:#111;transform-origin:0 0;transform:scaleX(1.200);-webkit-text-stroke:0.60px #111;">A00003</span>
<span class="t" style="left:608.9px;top:310.8px;font-size:12px;line-height:12px;color:#111;transform-origin:0 0;transform:scaleX(1.200);-webkit-text-stroke:0.60px #111;">1/1/2006</span>
<span class="t" style="left:674.0px;top:310.8px;font-size:12px;line-height:12px;color:#111;transform-origin:0 0;transform:scaleX(1.200);-webkit-text-stroke:0.60px #111;">ENC8</span>
<span class="t" style="left:832.0px;top:310.8px;font-size:12px;line-height:12px;color:#111;transform-origin:0 0;transform:scaleX(1.200);-webkit-text-stroke:0.60px #111;">$90.99</span>
<span class="t" style="left:960.2px;top:310.8px;font-size:12px;line-height:12px;color:#111;transform-origin:0 0;transform:scaleX(1.200);-webkit-text-stroke:0.60px #111;">19.0%</span>
<span class="t" style="left:1037.0px;top:310.8px;font-size:12px;line-height:12px;color:#111;transform-origin:0 0;transform:scaleX(1.200);-webkit-text-stroke:0.60px #111;">2</span>
<span class="t" style="left:1054.0px;top:310.8px;font-size:12px;line-height:12px;color:#111;transform-origin:0 0;transform:scaleX(1.200);-webkit-text-stroke:0.60px #111;">Express</span>
<span class="t" style="left:1186.9px;top:310.8px;font-size:12px;line-height:12px;color:#111;transform-origin:0 0;transform:scaleX(1.200);-webkit-text-stroke:0.60px #111;">$216.56</span>
<svg style="left:315.0px;top:308.9px" width="10" height="8" viewBox="0 0 10 8"><path d="M0 0 L9.5 0 L0 7.5 Z" fill="#2c8a2c"/></svg>
<span class="t" style="left:47.0px;top:326.5px;font-size:12px;line-height:12px;color:#111;transform-origin:0 0;transform:scaleX(1.200);-webkit-text-stroke:0.60px #111;">Banner Car Parts</span>
<span class="t" style="left:319.0px;top:326.5px;font-size:12px;line-height:12px;color:#111;transform-origin:0 0;transform:scaleX(1.200);-webkit-text-stroke:0.60px #111;">00009</span>
<span class="t" style="left:437.0px;top:326.5px;font-size:12px;line-height:12px;color:#111;transform-origin:0 0;transform:scaleX(1.200);-webkit-text-stroke:0.60px #111;">A00111</span>
<span class="t" style="left:600.9px;top:326.5px;font-size:12px;line-height:12px;color:#111;transform-origin:0 0;transform:scaleX(1.200);-webkit-text-stroke:0.60px #111;">1/23/2006</span>
<span class="t" style="left:674.0px;top:326.5px;font-size:12px;line-height:12px;color:#111;transform-origin:0 0;transform:scaleX(1.200);-webkit-text-stroke:0.60px #111;">KEYB102</span>
<span class="t" style="left:832.0px;top:326.5px;font-size:12px;line-height:12px;color:#111;transform-origin:0 0;transform:scaleX(1.200);-webkit-text-stroke:0.60px #111;">$15.60</span>
<span class="t" style="left:960.2px;top:326.5px;font-size:12px;line-height:12px;color:#111;transform-origin:0 0;transform:scaleX(1.200);-webkit-text-stroke:0.60px #111;">19.0%</span>
<span class="t" style="left:1037.0px;top:326.5px;font-size:12px;line-height:12px;color:#111;transform-origin:0 0;transform:scaleX(1.200);-webkit-text-stroke:0.60px #111;">1</span>
<span class="t" style="left:1054.0px;top:326.5px;font-size:12px;line-height:12px;color:#111;transform-origin:0 0;transform:scaleX(1.200);-webkit-text-stroke:0.60px #111;">Express</span>
<span class="t" style="left:1195.0px;top:326.5px;font-size:12px;line-height:12px;color:#111;transform-origin:0 0;transform:scaleX(1.200);-webkit-text-stroke:0.60px #111;">$18.56</span>
<svg style="left:315.0px;top:324.5px" width="10" height="8" viewBox="0 0 10 8"><path d="M0 0 L9.5 0 L0 7.5 Z" fill="#2c8a2c"/></svg>
<span class="t" style="left:47.0px;top:342.1px;font-size:12px;line-height:12px;color:#111;transform-origin:0 0;transform:scaleX(1.200);-webkit-text-stroke:0.60px #111;">Basiler&#x27;s United Garages</span>
<span class="t" style="left:319.0px;top:342.1px;font-size:12px;line-height:12px;color:#111;transform-origin:0 0;transform:scaleX(1.200);-webkit-text-stroke:0.60px #111;">00011</span>
<span class="t" style="left:437.0px;top:342.1px;font-size:12px;line-height:12px;color:#111;transform-origin:0 0;transform:scaleX(1.200);-webkit-text-stroke:0.60px #111;">A00132</span>
<span class="t" style="left:600.9px;top:342.1px;font-size:12px;line-height:12px;color:#111;transform-origin:0 0;transform:scaleX(1.200);-webkit-text-stroke:0.60px #111;">1/14/2006</span>
<span class="t" style="left:674.0px;top:342.1px;font-size:12px;line-height:12px;color:#111;transform-origin:0 0;transform:scaleX(1.200);-webkit-text-stroke:0.60px #111;">HD1G</span>
<span class="t" style="left:823.9px;top:342.1px;font-size:12px;line-height:12px;color:#111;transform-origin:0 0;transform:scaleX(1.200);-webkit-text-stroke:0.60px #111;">$400.99</span>
<span class="t" style="left:960.2px;top:342.1px;font-size:12px;line-height:12px;color:#111;transform-origin:0 0;transform:scaleX(1.200);-webkit-text-stroke:0.60px #111;">19.0%</span>
<span class="t" style="left:1037.0px;top:342.1px;font-size:12px;line-height:12px;color:#111;transform-origin:0 0;transform:scaleX(1.200);-webkit-text-stroke:0.60px #111;">2</span>
<span class="t" style="left:1054.0px;top:342.1px;font-size:12px;line-height:12px;color:#111;transform-origin:0 0;transform:scaleX(1.200);-webkit-text-stroke:0.60px #111;">Mail</span>
<span class="t" style="left:1186.9px;top:342.1px;font-size:12px;line-height:12px;color:#111;transform-origin:0 0;transform:scaleX(1.200);-webkit-text-stroke:0.60px #111;">$954.36</span>
<svg style="left:315.0px;top:340.1px" width="10" height="8" viewBox="0 0 10 8"><path d="M0 0 L9.5 0 L0 7.5 Z" fill="#2c8a2c"/></svg>
<span class="t" style="left:47.0px;top:357.8px;font-size:12px;line-height:12px;color:#111;transform-origin:0 0;transform:scaleX(1.200);-webkit-text-stroke:0.60px #111;">Basiler&#x27;s United Garages</span>
<span class="t" style="left:319.0px;top:357.8px;font-size:12px;line-height:12px;color:#111;transform-origin:0 0;transform:scaleX(1.200);-webkit-text-stroke:0.60px #111;">00011</span>
<span class="t" style="left:437.0px;top:357.8px;font-size:12px;line-height:12px;color:#111;transform-origin:0 0;transform:scaleX(1.200);-webkit-text-stroke:0.60px #111;">A00083</span>
<span class="t" style="left:600.9px;top:357.8px;font-size:12px;line-height:12px;color:#111;transform-origin:0 0;transform:scaleX(1.200);-webkit-text-stroke:0.60px #111;">1/18/2006</span>
<span class="t" style="left:674.0px;top:357.8px;font-size:12px;line-height:12px;color:#111;transform-origin:0 0;transform:scaleX(1.200);-webkit-text-stroke:0.60px #111;">HD500</span>
<span class="t" style="left:823.9px;top:357.8px;font-size:12px;line-height:12px;color:#111;transform-origin:0 0;transform:scaleX(1.200);-webkit-text-stroke:0.60px #111;">$312.34</span>
<span class="t" style="left:960.2px;top:357.8px;font-size:12px;line-height:12px;color:#111;transform-origin:0 0;transform:scaleX(1.200);-webkit-text-stroke:0.60px #111;">19.0%</span>
<span class="t" style="left:1029.0px;top:357.8px;font-size:12px;line-height:12px;color:#111;transform-origin:0 0;transform:scaleX(1.200);-webkit-text-stroke:0.60px #111;">10</span>
<span class="t" style="left:1054.0px;top:357.8px;font-size:12px;line-height:12px;color:#111;transform-origin:0 0;transform:scaleX(1.200);-webkit-text-stroke:0.60px #111;">Mail</span>
<span class="t" style="left:1174.9px;top:357.8px;font-size:12px;line-height:12px;color:#111;transform-origin:0 0;transform:scaleX(1.200);-webkit-text-stroke:0.60px #111;">$3,716.85</span>
<svg style="left:315.0px;top:355.8px" width="10" height="8" viewBox="0 0 10 8"><path d="M0 0 L9.5 0 L0 7.5 Z" fill="#2c8a2c"/></svg>
<span class="t" style="left:47.0px;top:373.4px;font-size:12px;line-height:12px;color:#111;transform-origin:0 0;transform:scaleX(1.200);-webkit-text-stroke:0.60px #111;">Basiler&#x27;s United Garages</span>
<span class="t" style="left:319.0px;top:373.4px;font-size:12px;line-height:12px;color:#111;transform-origin:0 0;transform:scaleX(1.200);-webkit-text-stroke:0.60px #111;">00011</span>
<span class="t" style="left:437.0px;top:373.4px;font-size:12px;line-height:12px;color:#111;transform-origin:0 0;transform:scaleX(1.200);-webkit-text-stroke:0.60px #111;">A00165</span>
<span class="t" style="left:592.9px;top:373.4px;font-size:12px;line-height:12px;color:#111;transform-origin:0 0;transform:scaleX(1.200);-webkit-text-stroke:0.60px #111;">12/16/2005</span>
<span class="t" style="left:674.0px;top:373.4px;font-size:12px;line-height:12px;color:#111;transform-origin:0 0;transform:scaleX(1.200);-webkit-text-stroke:0.60px #111;">CFAX</span>
<span class="t" style="left:823.9px;top:373.4px;font-size:12px;line-height:12px;color:#111;transform-origin:0 0;transform:scaleX(1.200);-webkit-text-stroke:0.60px #111;">$469.99</span>
<span class="t" style="left:960.2px;top:373.4px;font-size:12px;line-height:12px;color:#111;transform-origin:0 0;transform:scaleX(1.200);-webkit-text-stroke:0.60px #111;">19.0%</span>
<span class="t" style="left:1037.0px;top:373.4px;font-size:12px;line-height:12px;color:#111;transform-origin:0 0;transform:scaleX(1.200);-webkit-text-stroke:0.60px #111;">3</span>
<span class="t" style="left:1054.0px;top:373.4px;font-size:12px;line-height:12px;color:#111;transform-origin:0 0;transform:scaleX(1.200);-webkit-text-stroke:0.60px #111;">Courier</span>
<span class="t" style="left:1174.9px;top:373.4px;font-size:12px;line-height:12px;color:#111;transform-origin:0 0;transform:scaleX(1.200);-webkit-text-stroke:0.60px #111;">$1,677.86</span>
<svg style="left:315.0px;top:371.5px" width="10" height="8" viewBox="0 0 10 8"><path d="M0 0 L9.5 0 L0 7.5 Z" fill="#2c8a2c"/></svg>
<span class="t" style="left:47.0px;top:389.1px;font-size:12px;line-height:12px;color:#111;transform-origin:0 0;transform:scaleX(1.200);-webkit-text-stroke:0.60px #111;">Basiler&#x27;s United Garages</span>
<span class="t" style="left:319.0px;top:389.1px;font-size:12px;line-height:12px;color:#111;transform-origin:0 0;transform:scaleX(1.200);-webkit-text-stroke:0.60px #111;">00011</span>
<span class="t" style="left:437.0px;top:389.1px;font-size:12px;line-height:12px;color:#111;transform-origin:0 0;transform:scaleX(1.200);-webkit-text-stroke:0.60px #111;">A00032</span>
<span class="t" style="left:600.9px;top:389.1px;font-size:12px;line-height:12px;color:#111;transform-origin:0 0;transform:scaleX(1.200);-webkit-text-stroke:0.60px #111;">1/30/2006</span>
<span class="t" style="left:674.0px;top:389.1px;font-size:12px;line-height:12px;color:#111;transform-origin:0 0;transform:scaleX(1.200);-webkit-text-stroke:0.60px #111;">M14VGA</span>
<span class="t" style="left:823.9px;top:389.1px;font-size:12px;line-height:12px;color:#111;transform-origin:0 0;transform:scaleX(1.200);-webkit-text-stroke:0.60px #111;">$200.67</span>
<span class="t" style="left:960.2px;top:389.1px;font-size:12px;line-height:12px;color:#111;transform-origin:0 0;transform:scaleX(1.200);-webkit-text-stroke:0.60px #111;">19.0%</span>
<span class="t" style="left:1037.0px;top:389.1px;font-size:12px;line-height:12px;color:#111;transform-origin:0 0;transform:scaleX(1.200);-webkit-text-stroke:0.60px #111;">7</span>
<span class="t" style="left:1054.0px;top:389.1px;font-size:12px;line-height:12px;color:#111;transform-origin:0 0;transform:scaleX(1.200);-webkit-text-stroke:0.60px #111;">Courier</span>
<span class="t" style="left:1174.9px;top:389.1px;font-size:12px;line-height:12px;color:#111;transform-origin:0 0;transform:scaleX(1.200);-webkit-text-stroke:0.60px #111;">$1,671.58</span>
<svg style="left:315.0px;top:387.1px" width="10" height="8" viewBox="0 0 10 8"><path d="M0 0 L9.5 0 L0 7.5 Z" fill="#2c8a2c"/></svg>
<span class="t" style="left:47.0px;top:404.7px;font-size:12px;line-height:12px;color:#111;transform-origin:0 0;transform:scaleX(1.200);-webkit-text-stroke:0.60px #111;">Basiler&#x27;s United Garages</span>
<span class="t" style="left:319.0px;top:404.7px;font-size:12px;line-height:12px;color:#111;transform-origin:0 0;transform:scaleX(1.200);-webkit-text-stroke:0.60px #111;">00011</span>
<span class="t" style="left:437.0px;top:404.7px;font-size:12px;line-height:12px;color:#111;transform-origin:0 0;transform:scaleX(1.200);-webkit-text-stroke:0.60px #111;">A00114</span>
<span class="t" style="left:608.9px;top:404.7px;font-size:12px;line-height:12px;color:#111;transform-origin:0 0;transform:scaleX(1.200);-webkit-text-stroke:0.60px #111;">1/1/2006</span>
<span class="t" style="left:674.0px;top:404.7px;font-size:12px;line-height:12px;color:#111;transform-origin:0 0;transform:scaleX(1.200);-webkit-text-stroke:0.60px #111;">ENC8</span>
<span class="t" style="left:832.0px;top:404.7px;font-size:12px;line-height:12px;color:#111;transform-origin:0 0;transform:scaleX(1.200);-webkit-text-stroke:0.60px #111;">$90.99</span>
<span class="t" style="left:960.2px;top:404.7px;font-size:12px;line-height:12px;color:#111;transform-origin:0 0;transform:scaleX(1.200);-webkit-text-stroke:0.60px #111;">19.0%</span>
<span class="t" style="left:1037.0px;top:404.7px;font-size:12px;line-height:12px;color:#111;transform-origin:0 0;transform:scaleX(1.200);-webkit-text-stroke:0.60px #111;">8</span>
<span class="t" style="left:1054.0px;top:404.7px;font-size:12px;line-height:12px;color:#111;transform-origin:0 0;transform:scaleX(1.200);-webkit-text-stroke:0.60px #111;">Courier</span>
<span class="t" style="left:1186.9px;top:404.7px;font-size:12px;line-height:12px;color:#111;transform-origin:0 0;transform:scaleX(1.200);-webkit-text-stroke:0.60px #111;">$866.22</span>
<svg style="left:315.0px;top:402.8px" width="10" height="8" viewBox="0 0 10 8"><path d="M0 0 L9.5 0 L0 7.5 Z" fill="#2c8a2c"/></svg>
<span class="t" style="left:47.0px;top:420.4px;font-size:12px;line-height:12px;color:#111;transform-origin:0 0;transform:scaleX(1.200);-webkit-text-stroke:0.60px #111;">Basiler&#x27;s United Garages</span>
<span class="t" style="left:319.0px;top:420.4px;font-size:12px;line-height:12px;color:#111;transform-origin:0 0;transform:scaleX(1.200);-webkit-text-stroke:0.60px #111;">00011</span>
<span class="t" style="left:437.0px;top:420.4px;font-size:12px;line-height:12px;color:#111;transform-origin:0 0;transform:scaleX(1.200);-webkit-text-stroke:0.60px #111;">A00153</span>
<span class="t" style="left:600.9px;top:420.4px;font-size:12px;line-height:12px;color:#111;transform-origin:0 0;transform:scaleX(1.200);-webkit-text-stroke:0.60px #111;">3/18/2006</span>
<span class="t" style="left:674.0px;top:420.4px;font-size:12px;line-height:12px;color:#111;transform-origin:0 0;transform:scaleX(1.200);-webkit-text-stroke:0.60px #111;">SLEAD</span>
<span class="t" style="left:840.0px;top:420.4px;font-size:12px;line-height:12px;color:#111;transform-origin:0 0;transform:scaleX(1.200);-webkit-text-stroke:0.60px #111;">$4.55</span>
<span class="t" style="left:960.2px;top:420.4px;font-size:12px;line-height:12px;color:#111;transform-origin:0 0;transform:scaleX(1.200);-webkit-text-stroke:0.60px #111;">19.0%</span>
<span class="t" style="left:1037.0px;top:420.4px;font-size:12px;line-height:12px;color:#111;transform-origin:0 0;transform:scaleX(1.200);-webkit-text-stroke:0.60px #111;">5</span>
<span class="t" style="left:1054.0px;top:420.4px;font-size:12px;line-height:12px;color:#111;transform-origin:0 0;transform:scaleX(1.200);-webkit-text-stroke:0.60px #111;">Courier</span>
<span class="t" style="left:1195.0px;top:420.4px;font-size:12px;line-height:12px;color:#111;transform-origin:0 0;transform:scaleX(1.200);-webkit-text-stroke:0.60px #111;">$27.07</span>
<svg style="left:315.0px;top:418.4px" width="10" height="8" viewBox="0 0 10 8"><path d="M0 0 L9.5 0 L0 7.5 Z" fill="#2c8a2c"/></svg>
<span class="t" style="left:47.0px;top:436.0px;font-size:12px;line-height:12px;color:#111;transform-origin:0 0;transform:scaleX(1.200);-webkit-text-stroke:0.60px #111;">Bauman Engineering</span>
<span class="t" style="left:319.0px;top:436.0px;font-size:12px;line-height:12px;color:#111;transform-origin:0 0;transform:scaleX(1.200);-webkit-text-stroke:0.60px #111;">00012</span>
<span class="t" style="left:437.0px;top:436.0px;font-size:12px;line-height:12px;color:#111;transform-origin:0 0;transform:scaleX(1.200);-webkit-text-stroke:0.60px #111;">A00004</span>
<span class="t" style="left:608.9px;top:436.0px;font-size:12px;line-height:12px;color:#111;transform-origin:0 0;transform:scaleX(1.200);-webkit-text-stroke:0.60px #111;">1/4/2006</span>
<span class="t" style="left:674.0px;top:436.0px;font-size:12px;line-height:12px;color:#111;transform-origin:0 0;transform:scaleX(1.200);-webkit-text-stroke:0.60px #111;">FD5.25</span>
<span class="t" style="left:823.9px;top:436.0px;font-size:12px;line-height:12px;color:#111;transform-origin:0 0;transform:scaleX(1.200);-webkit-text-stroke:0.60px #111;">$145.65</span>
<span class="t" style="left:960.2px;top:436.0px;font-size:12px;line-height:12px;color:#111;transform-origin:0 0;transform:scaleX(1.200);-webkit-text-stroke:0.60px #111;">19.0%</span>
<span class="t" style="left:1037.0px;top:436.0px;font-size:12px;line-height:12px;color:#111;transform-origin:0 0;transform:scaleX(1.200);-webkit-text-stroke:0.60px #111;">4</span>
<span class="t" style="left:1054.0px;top:436.0px;font-size:12px;line-height:12px;color:#111;transform-origin:0 0;transform:scaleX(1.200);-webkit-text-stroke:0.60px #111;">Courier</span>
<span class="t" style="left:1186.9px;top:436.0px;font-size:12px;line-height:12px;color:#111;transform-origin:0 0;transform:scaleX(1.200);-webkit-text-stroke:0.60px #111;">$693.29</span>
<svg style="left:315.0px;top:434.0px" width="10" height="8" viewBox="0 0 10 8"><path d="M0 0 L9.5 0 L0 7.5 Z" fill="#2c8a2c"/></svg>
<span class="t" style="left:47.0px;top:451.7px;font-size:12px;line-height:12px;color:#111;transform-origin:0 0;transform:scaleX(1.200);-webkit-text-stroke:0.60px #111;">Brack&#x27;s Windshields</span>
<span class="t" style="left:319.0px;top:451.7px;font-size:12px;line-height:12px;color:#111;transform-origin:0 0;transform:scaleX(1.200);-webkit-text-stroke:0.60px #111;">00013</span>
<span class="t" style="left:437.0px;top:451.7px;font-size:12px;line-height:12px;color:#111;transform-origin:0 0;transform:scaleX(1.200);-webkit-text-stroke:0.60px #111;">A00160</span>
<span class="t" style="left:608.9px;top:451.7px;font-size:12px;line-height:12px;color:#111;transform-origin:0 0;transform:scaleX(1.200);-webkit-text-stroke:0.60px #111;">3/4/2006</span>
<span class="t" style="left:674.0px;top:451.7px;font-size:12px;line-height:12px;color:#111;transform-origin:0 0;transform:scaleX(1.200);-webkit-text-stroke:0.60px #111;">PCM386</span>
<span class="t" style="left:811.9px;top:451.7px;font-size:12px;line-height:12px;color:#111;transform-origin:0 0;transform:scaleX(1.200);-webkit-text-stroke:0.60px #111;">$1,435.99</span>
<span class="t" style="left:960.2px;top:451.7px;font-size:12px;line-height:12px;color:#111;transform-origin:0 0;transform:scaleX(1.200);-webkit-text-stroke:0.60px #111;">19.0%</span>
<span class="t" style="left:1037.0px;top:451.7px;font-size:12px;line-height:12px;color:#111;transform-origin:0 0;transform:scaleX(1.200);-webkit-text-stroke:0.60px #111;">3</span>
<span class="t" style="left:1054.0px;top:451.7px;font-size:12px;line-height:12px;color:#111;transform-origin:0 0;transform:scaleX(1.200);-webkit-text-stroke:0.60px #111;">Mail</span>
<span class="t" style="left:1174.9px;top:451.7px;font-size:12px;line-height:12px;color:#111;transform-origin:0 0;transform:scaleX(1.200);-webkit-text-stroke:0.60px #111;">$5,126.48</span>
<svg style="left:315.0px;top:449.7px" width="10" height="8" viewBox="0 0 10 8"><path d="M0 0 L9.5 0 L0 7.5 Z" fill="#2c8a2c"/></svg>
<span class="t" style="left:47.0px;top:467.3px;font-size:12px;line-height:12px;color:#111;transform-origin:0 0;transform:scaleX(1.200);-webkit-text-stroke:0.60px #111;">Brack&#x27;s Windshields</span>
<span class="t" style="left:319.0px;top:467.3px;font-size:12px;line-height:12px;color:#111;transform-origin:0 0;transform:scaleX(1.200);-webkit-text-stroke:0.60px #111;">00013</span>
<span class="t" style="left:437.0px;top:467.3px;font-size:12px;line-height:12px;color:#111;transform-origin:0 0;transform:scaleX(1.200);-webkit-text-stroke:0.60px #111;">A00057</span>
<span class="t" style="left:608.9px;top:467.3px;font-size:12px;line-height:12px;color:#111;transform-origin:0 0;transform:scaleX(1.200);-webkit-text-stroke:0.60px #111;">1/2/2006</span>
<span class="t" style="left:674.0px;top:467.3px;font-size:12px;line-height:12px;color:#111;transform-origin:0 0;transform:scaleX(1.200);-webkit-text-stroke:0.60px #111;">FD3.5</span>
<span class="t" style="left:823.9px;top:467.3px;font-size:12px;line-height:12px;color:#111;transform-origin:0 0;transform:scaleX(1.200);-webkit-text-stroke:0.60px #111;">$134.33</span>
<span class="t" style="left:968.2px;top:467.3px;font-size:12px;line-height:12px;color:#111;transform-origin:0 0;transform:scaleX(1.200);-webkit-text-stroke:0.60px #111;">0.0%</span>
<span class="t" style="left:1037.0px;top:467.3px;font-size:12px;line-height:12px;color:#111;transform-origin:0 0;transform:scaleX(1.200);-webkit-text-stroke:0.60px #111;">7</span>
<span class="t" style="left:1054.0px;top:467.3px;font-size:12px;line-height:12px;color:#111;transform-origin:0 0;transform:scaleX(1.200);-webkit-text-stroke:0.60px #111;">Mail</span>
<span class="t" style="left:1186.9px;top:467.3px;font-size:12px;line-height:12px;color:#111;transform-origin:0 0;transform:scaleX(1.200);-webkit-text-stroke:0.60px #111;">$940.31</span>
<svg style="left:315.0px;top:465.4px" width="10" height="8" viewBox="0 0 10 8"><path d="M0 0 L9.5 0 L0 7.5 Z" fill="#2c8a2c"/></svg>
<span class="t" style="left:47.0px;top:483.0px;font-size:12px;line-height:12px;color:#111;transform-origin:0 0;transform:scaleX(1.200);-webkit-text-stroke:0.60px #111;">Brack&#x27;s Windshields</span>
<span class="t" style="left:319.0px;top:483.0px;font-size:12px;line-height:12px;color:#111;transform-origin:0 0;transform:scaleX(1.200);-webkit-text-stroke:0.60px #111;">00013</span>
<span class="t" style="left:437.0px;top:483.0px;font-size:12px;line-height:12px;color:#111;transform-origin:0 0;transform:scaleX(1.200);-webkit-text-stroke:0.60px #111;">A00063</span>
<span class="t" style="left:608.9px;top:483.0px;font-size:12px;line-height:12px;color:#111;transform-origin:0 0;transform:scaleX(1.200);-webkit-text-stroke:0.60px #111;">1/8/2006</span>
<span class="t" style="left:674.0px;top:483.0px;font-size:12px;line-height:12px;color:#111;transform-origin:0 0;transform:scaleX(1.200);-webkit-text-stroke:0.60px #111;">HD200</span>
<span class="t" style="left:823.9px;top:483.0px;font-size:12px;line-height:12px;color:#111;transform-origin:0 0;transform:scaleX(1.200);-webkit-text-stroke:0.60px #111;">$204.35</span>
<span class="t" style="left:960.2px;top:483.0px;font-size:12px;line-height:12px;color:#111;transform-origin:0 0;transform:scaleX(1.200);-webkit-text-stroke:0.60px #111;">19.0%</span>
<span class="t" style="left:1037.0px;top:483.0px;font-size:12px;line-height:12px;color:#111;transform-origin:0 0;transform:scaleX(1.200);-webkit-text-stroke:0.60px #111;">5</span>
<span class="t" style="left:1054.0px;top:483.0px;font-size:12px;line-height:12px;color:#111;transform-origin:0 0;transform:scaleX(1.200);-webkit-text-stroke:0.60px #111;">Courier</span>
<span class="t" style="left:1174.9px;top:483.0px;font-size:12px;line-height:12px;color:#111;transform-origin:0 0;transform:scaleX(1.200);-webkit-text-stroke:0.60px #111;">$1,215.88</span>
<svg style="left:315.0px;top:481.0px" width="10" height="8" viewBox="0 0 10 8"><path d="M0 0 L9.5 0 L0 7.5 Z" fill="#2c8a2c"/></svg>
<span class="t" style="left:47.0px;top:498.6px;font-size:12px;line-height:12px;color:#111;transform-origin:0 0;transform:scaleX(1.200);-webkit-text-stroke:0.60px #111;">British Longhaul Truckers Ass.</span>
<span class="t" style="left:319.0px;top:498.6px;font-size:12px;line-height:12px;color:#111;transform-origin:0 0;transform:scaleX(1.200);-webkit-text-stroke:0.60px #111;">00014</span>
<span class="t" style="left:437.0px;top:498.6px;font-size:12px;line-height:12px;color:#111;transform-origin:0 0;transform:scaleX(1.200);-webkit-text-stroke:0.60px #111;">A00131</span>
<span class="t" style="left:592.9px;top:498.6px;font-size:12px;line-height:12px;color:#111;transform-origin:0 0;transform:scaleX(1.200);-webkit-text-stroke:0.60px #111;">12/26/2005</span>
<span class="t" style="left:674.0px;top:498.6px;font-size:12px;line-height:12px;color:#111;transform-origin:0 0;transform:scaleX(1.200);-webkit-text-stroke:0.60px #111;">CVGA</span>
<span class="t" style="left:823.9px;top:498.6px;font-size:12px;line-height:12px;color:#111;transform-origin:0 0;transform:scaleX(1.200);-webkit-text-stroke:0.60px #111;">$300.45</span>
<span class="t" style="left:960.2px;top:498.6px;font-size:12px;line-height:12px;color:#111;transform-origin:0 0;transform:scaleX(1.200);-webkit-text-stroke:0.60px #111;">19.0%</span>
<span class="t" style="left:1037.0px;top:498.6px;font-size:12px;line-height:12px;color:#111;transform-origin:0 0;transform:scaleX(1.200);-webkit-text-stroke:0.60px #111;">9</span>
<span class="t" style="left:1054.0px;top:498.6px;font-size:12px;line-height:12px;color:#111;transform-origin:0 0;transform:scaleX(1.200);-webkit-text-stroke:0.60px #111;">Express</span>
<span class="t" style="left:1174.9px;top:498.6px;font-size:12px;line-height:12px;color:#111;transform-origin:0 0;transform:scaleX(1.200);-webkit-text-stroke:0.60px #111;">$3,217.82</span>
<svg style="left:315.0px;top:496.7px" width="10" height="8" viewBox="0 0 10 8"><path d="M0 0 L9.5 0 L0 7.5 Z" fill="#2c8a2c"/></svg>
<span class="t" style="left:47.0px;top:514.3px;font-size:12px;line-height:12px;color:#111;transform-origin:0 0;transform:scaleX(1.200);-webkit-text-stroke:0.60px #111;">Bunsel Office Supplies</span>
<span class="t" style="left:319.0px;top:514.3px;font-size:12px;line-height:12px;color:#111;transform-origin:0 0;transform:scaleX(1.200);-webkit-text-stroke:0.60px #111;">00015</span>
<span class="t" style="left:437.0px;top:514.3px;font-size:12px;line-height:12px;color:#111;transform-origin:0 0;transform:scaleX(1.200);-webkit-text-stroke:0.60px #111;">A00020</span>
<span class="t" style="left:592.9px;top:514.3px;font-size:12px;line-height:12px;color:#111;transform-origin:0 0;transform:scaleX(1.200);-webkit-text-stroke:0.60px #111;">12/28/2005</span>
<span class="t" style="left:674.0px;top:514.3px;font-size:12px;line-height:12px;color:#111;transform-origin:0 0;transform:scaleX(1.200);-webkit-text-stroke:0.60px #111;">ENC16</span>
<span class="t" style="left:823.9px;top:514.3px;font-size:12px;line-height:12px;color:#111;transform-origin:0 0;transform:scaleX(1.200);-webkit-text-stroke:0.60px #111;">$100.45</span>
<span class="t" style="left:960.2px;top:514.3px;font-size:12px;line-height:12px;color:#111;transform-origin:0 0;transform:scaleX(1.200);-webkit-text-stroke:0.60px #111;">19.0%</span>
<span class="t" style="left:1037.0px;top:514.3px;font-size:12px;line-height:12px;color:#111;transform-origin:0 0;transform:scaleX(1.200);-webkit-text-stroke:0.60px #111;">5</span>
<span class="t" style="left:1054.0px;top:514.3px;font-size:12px;line-height:12px;color:#111;transform-origin:0 0;transform:scaleX(1.200);-webkit-text-stroke:0.60px #111;">Mail</span>
<span class="t" style="left:1186.9px;top:514.3px;font-size:12px;line-height:12px;color:#111;transform-origin:0 0;transform:scaleX(1.200);-webkit-text-stroke:0.60px #111;">$597.68</span>
<svg style="left:315.0px;top:512.3px" width="10" height="8" viewBox="0 0 10 8"><path d="M0 0 L9.5 0 L0 7.5 Z" fill="#2c8a2c"/></svg>
<span class="t" style="left:47.0px;top:529.9px;font-size:12px;line-height:12px;color:#111;transform-origin:0 0;transform:scaleX(1.200);-webkit-text-stroke:0.60px #111;">Bunsel Office Supplies</span>
<span class="t" style="left:319.0px;top:529.9px;font-size:12px;line-height:12px;color:#111;transform-origin:0 0;transform:scaleX(1.200);-webkit-text-stroke:0.60px #111;">00015</span>
<span class="t" style="left:437.0px;top:529.9px;font-size:12px;line-height:12px;color:#111;transform-origin:0 0;transform:scaleX(1.200);-webkit-text-stroke:0.60px #111;">A00017</span>
<span class="t" style="left:594.0px;top:529.9px;font-size:12px;line-height:12px;color:#111;transform-origin:0 0;transform:scaleX(1.200);-webkit-text-stroke:0.60px #111;">12/11/2005</span>
<span class="t" style="left:674.0px;top:529.9px;font-size:12px;line-height:12px;color:#111;transform-origin:0 0;transform:scaleX(1.200);-webkit-text-stroke:0.60px #111;">CEGA</span>
<span class="t" style="left:823.9px;top:529.9px;font-size:12px;line-height:12px;color:#111;transform-origin:0 0;transform:scaleX(1.200);-webkit-text-stroke:0.60px #111;">$250.00</span>
<span class="t" style="left:960.2px;top:529.9px;font-size:12px;line-height:12px;color:#111;transform-origin:0 0;transform:scaleX(1.200);-webkit-text-stroke:0.60px #111;">19.0%</span>
<span class="t" style="left:1029.0px;top:529.9px;font-size:12px;line-height:12px;color:#111;transform-origin:0 0;transform:scaleX(1.200);-webkit-text-stroke:0.60px #111;">10</span>
<span class="t" style="left:1054.0px;top:529.9px;font-size:12px;line-height:12px;color:#111;transform-origin:0 0;transform:scaleX(1.200);-webkit-text-stroke:0.60px #111;">Courier</span>
<span class="t" style="left:1174.9px;top:529.9px;font-size:12px;line-height:12px;color:#111;transform-origin:0 0;transform:scaleX(1.200);-webkit-text-stroke:0.60px #111;">$2,975.00</span>
<svg style="left:315.0px;top:528.0px" width="10" height="8" viewBox="0 0 10 8"><path d="M0 0 L9.5 0 L0 7.5 Z" fill="#2c8a2c"/></svg>
<span class="t" style="left:47.0px;top:545.6px;font-size:12px;line-height:12px;color:#111;transform-origin:0 0;transform:scaleX(1.200);-webkit-text-stroke:0.60px #111;">Bunsel Office Supplies</span>
<span class="t" style="left:319.0px;top:545.6px;font-size:12px;line-height:12px;color:#111;transform-origin:0 0;transform:scaleX(1.200);-webkit-text-stroke:0.60px #111;">00015</span>
<span class="t" style="left:437.0px;top:545.6px;font-size:12px;line-height:12px;color:#111;transform-origin:0 0;transform:scaleX(1.200);-webkit-text-stroke:0.60px #111;">A00190</span>
<span class="t" style="left:600.9px;top:545.6px;font-size:12px;line-height:12px;color:#111;transform-origin:0 0;transform:scaleX(1.200);-webkit-text-stroke:0.60px #111;">1/28/2006</span>
<span class="t" style="left:674.0px;top:545.6px;font-size:12px;line-height:12px;color:#111;transform-origin:0 0;transform:scaleX(1.200);-webkit-text-stroke:0.60px #111;">M14VGA</span>
<span class="t" style="left:823.9px;top:545.6px;font-size:12px;line-height:12px;color:#111;transform-origin:0 0;transform:scaleX(1.200);-webkit-text-stroke:0.60px #111;">$200.67</span>
<span class="t" style="left:960.2px;top:545.6px;font-size:12px;line-height:12px;color:#111;transform-origin:0 0;transform:scaleX(1.200);-webkit-text-stroke:0.60px #111;">19.0%</span>
<span class="t" style="left:1037.0px;top:545.6px;font-size:12px;line-height:12px;color:#111;transform-origin:0 0;transform:scaleX(1.200);-webkit-text-stroke:0.60px #111;">7</span>
<span class="t" style="left:1054.0px;top:545.6px;font-size:12px;line-height:12px;color:#111;transform-origin:0 0;transform:scaleX(1.200);-webkit-text-stroke:0.60px #111;">Courier</span>
<span class="t" style="left:1174.9px;top:545.6px;font-size:12px;line-height:12px;color:#111;transform-origin:0 0;transform:scaleX(1.200);-webkit-text-stroke:0.60px #111;">$1,671.58</span>
<svg style="left:315.0px;top:543.6px" width="10" height="8" viewBox="0 0 10 8"><path d="M0 0 L9.5 0 L0 7.5 Z" fill="#2c8a2c"/></svg>
<span class="t" style="left:47.0px;top:561.2px;font-size:12px;line-height:12px;color:#111;transform-origin:0 0;transform:scaleX(1.200);-webkit-text-stroke:0.60px #111;">Bunsel Office Supplies</span>
<span class="t" style="left:319.0px;top:561.2px;font-size:12px;line-height:12px;color:#111;transform-origin:0 0;transform:scaleX(1.200);-webkit-text-stroke:0.60px #111;">00015</span>
<span class="t" style="left:437.0px;top:561.2px;font-size:12px;line-height:12px;color:#111;transform-origin:0 0;transform:scaleX(1.200);-webkit-text-stroke:0.60px #111;">A00046</span>
<span class="t" style="left:600.9px;top:561.2px;font-size:12px;line-height:12px;color:#111;transform-origin:0 0;transform:scaleX(1.200);-webkit-text-stroke:0.60px #111;">1/31/2006</span>
<span class="t" style="left:674.0px;top:561.2px;font-size:12px;line-height:12px;color:#111;transform-origin:0 0;transform:scaleX(1.200);-webkit-text-stroke:0.60px #111;">M14VGA</span>
<span class="t" style="left:823.9px;top:561.2px;font-size:12px;line-height:12px;color:#111;transform-origin:0 0;transform:scaleX(1.200);-webkit-text-stroke:0.60px #111;">$200.67</span>
<span class="t" style="left:960.2px;top:561.2px;font-size:12px;line-height:12px;color:#111;transform-origin:0 0;transform:scaleX(1.200);-webkit-text-stroke:0.60px #111;">19.0%</span>
<span class="t" style="left:1037.0px;top:561.2px;font-size:12px;line-height:12px;color:#111;transform-origin:0 0;transform:scaleX(1.200);-webkit-text-stroke:0.60px #111;">1</span>
<span class="t" style="left:1054.0px;top:561.2px;font-size:12px;line-height:12px;color:#111;transform-origin:0 0;transform:scaleX(1.200);-webkit-text-stroke:0.60px #111;">Courier</span>
<span class="t" style="left:1186.9px;top:561.2px;font-size:12px;line-height:12px;color:#111;transform-origin:0 0;transform:scaleX(1.200);-webkit-text-stroke:0.60px #111;">$238.80</span>
<svg style="left:315.0px;top:559.2px" width="10" height="8" viewBox="0 0 10 8"><path d="M0 0 L9.5 0 L0 7.5 Z" fill="#2c8a2c"/></svg>
<span class="t" style="left:47.0px;top:576.9px;font-size:12px;line-height:12px;color:#111;transform-origin:0 0;transform:scaleX(1.200);-webkit-text-stroke:0.60px #111;">Bunsel Office Supplies</span>
<span class="t" style="left:319.0px;top:576.9px;font-size:12px;line-height:12px;color:#111;transform-origin:0 0;transform:scaleX(1.200);-webkit-text-stroke:0.60px #111;">00015</span>
<span class="t" style="left:437.0px;top:576.9px;font-size:12px;line-height:12px;color:#111;transform-origin:0 0;transform:scaleX(1.200);-webkit-text-stroke:0.60px #111;">A00048</span>
<span class="t" style="left:600.9px;top:576.9px;font-size:12px;line-height:12px;color:#111;transform-origin:0 0;transform:scaleX(1.200);-webkit-text-stroke:0.60px #111;">1/18/2006</span>
<span class="t" style="left:674.0px;top:576.9px;font-size:12px;line-height:12px;color:#111;transform-origin:0 0;transform:scaleX(1.200);-webkit-text-stroke:0.60px #111;">HD500</span>
<span class="t" style="left:823.9px;top:576.9px;font-size:12px;line-height:12px;color:#111;transform-origin:0 0;transform:scaleX(1.200);-webkit-text-stroke:0.60px #111;">$312.34</span>
<span class="t" style="left:960.2px;top:576.9px;font-size:12px;line-height:12px;color:#111;transform-origin:0 0;transform:scaleX(1.200);-webkit-text-stroke:0.60px #111;">19.0%</span>
<span class="t" style="left:1037.0px;top:576.9px;font-size:12px;line-height:12px;color:#111;transform-origin:0 0;transform:scaleX(1.200);-webkit-text-stroke:0.60px #111;">4</span>
<span class="t" style="left:1054.0px;top:576.9px;font-size:12px;line-height:12px;color:#111;transform-origin:0 0;transform:scaleX(1.200);-webkit-text-stroke:0.60px #111;">Express</span>
<span class="t" style="left:1174.9px;top:576.9px;font-size:12px;line-height:12px;color:#111;transform-origin:0 0;transform:scaleX(1.200);-webkit-text-stroke:0.60px #111;">$1,486.74</span>
<svg style="left:315.0px;top:574.9px" width="10" height="8" viewBox="0 0 10 8"><path d="M0 0 L9.5 0 L0 7.5 Z" fill="#2c8a2c"/></svg>
<span class="t" style="left:47.0px;top:592.5px;font-size:12px;line-height:12px;color:#111;transform-origin:0 0;transform:scaleX(1.200);-webkit-text-stroke:0.60px #111;">Caramel Cookie Bakers</span>
<span class="t" style="left:319.0px;top:592.5px;font-size:12px;line-height:12px;color:#111;transform-origin:0 0;transform:scaleX(1.200);-webkit-text-stroke:0.60px #111;">00016</span>
<span class="t" style="left:437.0px;top:592.5px;font-size:12px;line-height:12px;color:#111;transform-origin:0 0;transform:scaleX(1.200);-webkit-text-stroke:0.60px #111;">A00104</span>
<span class="t" style="left:608.9px;top:592.5px;font-size:12px;line-height:12px;color:#111;transform-origin:0 0;transform:scaleX(1.200);-webkit-text-stroke:0.60px #111;">3/7/2006</span>
<span class="t" style="left:674.0px;top:592.5px;font-size:12px;line-height:12px;color:#111;transform-origin:0 0;transform:scaleX(1.200);-webkit-text-stroke:0.60px #111;">PLEAD</span>
<span class="t" style="left:832.0px;top:592.5px;font-size:12px;line-height:12px;color:#111;transform-origin:0 0;transform:scaleX(1.200);-webkit-text-stroke:0.60px #111;">$10.55</span>
<span class="t" style="left:960.2px;top:592.5px;font-size:12px;line-height:12px;color:#111;transform-origin:0 0;transform:scaleX(1.200);-webkit-text-stroke:0.60px #111;">19.0%</span>
<span class="t" style="left:1037.0px;top:592.5px;font-size:12px;line-height:12px;color:#111;transform-origin:0 0;transform:scaleX(1.200);-webkit-text-stroke:0.60px #111;">2</span>
<span class="t" style="left:1054.0px;top:592.5px;font-size:12px;line-height:12px;color:#111;transform-origin:0 0;transform:scaleX(1.200);-webkit-text-stroke:0.60px #111;">Mail</span>
<span class="t" style="left:1196.0px;top:592.5px;font-size:12px;line-height:12px;color:#111;transform-origin:0 0;transform:scaleX(1.200);-webkit-text-stroke:0.60px #111;">$25.11</span>
<svg style="left:315.0px;top:590.5px" width="10" height="8" viewBox="0 0 10 8"><path d="M0 0 L9.5 0 L0 7.5 Z" fill="#2c8a2c"/></svg>
<span class="t" style="left:47.0px;top:608.2px;font-size:12px;line-height:12px;color:#111;transform-origin:0 0;transform:scaleX(1.200);-webkit-text-stroke:0.60px #111;">Caramel Cookie Bakers</span>
<span class="t" style="left:319.0px;top:608.2px;font-size:12px;line-height:12px;color:#111;transform-origin:0 0;transform:scaleX(1.200);-webkit-text-stroke:0.60px #111;">00016</span>
<span class="t" style="left:437.0px;top:608.2px;font-size:12px;line-height:12px;color:#111;transform-origin:0 0;transform:scaleX(1.200);-webkit-text-stroke:0.60px #111;">A00135</span>
<span class="t" style="left:600.9px;top:608.2px;font-size:12px;line-height:12px;color:#111;transform-origin:0 0;transform:scaleX(1.200);-webkit-text-stroke:0.60px #111;">1/27/2006</span>
<span class="t" style="left:674.0px;top:608.2px;font-size:12px;line-height:12px;color:#111;transform-origin:0 0;transform:scaleX(1.200);-webkit-text-stroke:0.60px #111;">M14MULT</span>
<span class="t" style="left:823.9px;top:608.2px;font-size:12px;line-height:12px;color:#111;transform-origin:0 0;transform:scaleX(1.200);-webkit-text-stroke:0.60px #111;">$345.55</span>
<span class="t" style="left:968.2px;top:608.2px;font-size:12px;line-height:12px;color:#111;transform-origin:0 0;transform:scaleX(1.200);-webkit-text-stroke:0.60px #111;">0.0%</span>
<span class="t" style="left:1037.0px;top:608.2px;font-size:12px;line-height:12px;color:#111;transform-origin:0 0;transform:scaleX(1.200);-webkit-text-stroke:0.60px #111;">7</span>
<span class="t" style="left:1054.0px;top:608.2px;font-size:12px;line-height:12px;color:#111;transform-origin:0 0;transform:scaleX(1.200);-webkit-text-stroke:0.60px #111;">Express</span>
<span class="t" style="left:1174.9px;top:608.2px;font-size:12px;line-height:12px;color:#111;transform-origin:0 0;transform:scaleX(1.200);-webkit-text-stroke:0.60px #111;">$2,418.85</span>
<svg style="left:315.0px;top:606.2px" width="10" height="8" viewBox="0 0 10 8"><path d="M0 0 L9.5 0 L0 7.5 Z" fill="#2c8a2c"/></svg>
<span class="t" style="left:47.0px;top:623.8px;font-size:12px;line-height:12px;color:#111;transform-origin:0 0;transform:scaleX(1.200);-webkit-text-stroke:0.60px #111;">Cargo Office Machines</span>
<span class="t" style="left:319.0px;top:623.8px;font-size:12px;line-height:12px;color:#111;transform-origin:0 0;transform:scaleX(1.200);-webkit-text-stroke:0.60px #111;">00017</span>
<span class="t" style="left:437.0px;top:623.8px;font-size:12px;line-height:12px;color:#111;transform-origin:0 0;transform:scaleX(1.200);-webkit-text-stroke:0.60px #111;">A00002</span>
<span class="t" style="left:600.9px;top:623.8px;font-size:12px;line-height:12px;color:#111;transform-origin:0 0;transform:scaleX(1.200);-webkit-text-stroke:0.60px #111;">3/15/2006</span>
<span class="t" style="left:674.0px;top:623.8px;font-size:12px;line-height:12px;color:#111;transform-origin:0 0;transform:scaleX(1.200);-webkit-text-stroke:0.60px #111;">RAM1MB</span>
<span class="t" style="left:832.0px;top:623.8px;font-size:12px;line-height:12px;color:#111;transform-origin:0 0;transform:scaleX(1.200);-webkit-text-stroke:0.60px #111;">$34.50</span>
<span class="t" style="left:960.2px;top:623.8px;font-size:12px;line-height:12px;color:#111;transform-origin:0 0;transform:scaleX(1.200);-webkit-text-stroke:0.60px #111;">19.0%</span>
<span class="t" style="left:1037.0px;top:623.8px;font-size:12px;line-height:12px;color:#111;transform-origin:0 0;transform:scaleX(1.200);-webkit-text-stroke:0.60px #111;">6</span>
<span class="t" style="left:1054.0px;top:623.8px;font-size:12px;line-height:12px;color:#111;transform-origin:0 0;transform:scaleX(1.200);-webkit-text-stroke:0.60px #111;">Mail</span>
<span class="t" style="left:1186.9px;top:623.8px;font-size:12px;line-height:12px;color:#111;transform-origin:0 0;transform:scaleX(1.200);-webkit-text-stroke:0.60px #111;">$246.33</span>
<svg style="left:315.0px;top:621.9px" width="10" height="8" viewBox="0 0 10 8"><path d="M0 0 L9.5 0 L0 7.5 Z" fill="#2c8a2c"/></svg>
<span class="t" style="left:47.0px;top:20.2px;font-size:11px;line-height:11px;color:#000;font-weight:bold;transform-origin:0 0;transform:scaleX(1.441);-webkit-text-stroke:1.0px #000;">Customer</span>
<span class="t" style="left:319.0px;top:20.2px;font-size:11px;line-height:11px;color:#000;font-weight:bold;transform-origin:0 0;transform:scaleX(1.487);-webkit-text-stroke:1.0px #000;">CUSTOMER I</span>
<span class="t" style="left:438.0px;top:20.2px;font-size:11px;line-height:11px;color:#000;font-weight:bold;transform-origin:0 0;transform:scaleX(1.439);-webkit-text-stroke:1.0px #000;">ORDER NUMB</span>
<span class="t" style="left:562.0px;top:20.2px;font-size:11px;line-height:11px;color:#000;font-weight:bold;transform-origin:0 0;transform:scaleX(1.513);-webkit-text-stroke:1.0px #000;">ORDER DAT</span>
<span class="t" style="left:675.0px;top:20.2px;font-size:11px;line-height:11px;color:#000;font-weight:bold;transform-origin:0 0;transform:scaleX(1.494);-webkit-text-stroke:1.0px #000;">PROCUCT NUM</span>
<span class="t" style="left:814.0px;top:20.2px;font-size:11px;line-height:11px;color:#000;font-weight:bold;transform-origin:0 0;transform:scaleX(1.410);-webkit-text-stroke:1.0px #000;">PRICE</span>
<span class="t" style="left:886.0px;top:20.2px;font-size:11px;line-height:11px;color:#000;font-weight:bold;transform-origin:0 0;transform:scaleX(1.510);-webkit-text-stroke:1.0px #000;">TAX RATE</span>
<span class="t" style="left:1012.0px;top:20.2px;font-size:11px;line-height:11px;color:#000;font-weight:bold;transform-origin:0 0;transform:scaleX(1.671);-webkit-text-stroke:1.0px #000;">A</span>
<span class="t" style="left:1055.0px;top:20.2px;font-size:11px;line-height:11px;color:#000;font-weight:bold;transform-origin:0 0;transform:scaleX(1.401);-webkit-text-stroke:1.0px #000;">SHIPMENT</span>
<span class="t" style="left:1147.0px;top:20.2px;font-size:11px;line-height:11px;color:#000;font-weight:bold;transform-origin:0 0;transform:scaleX(1.524);-webkit-text-stroke:1.0px #000;">ORDER VA</span>
<span class="t" style="left:1247.5px;top:20.5px;font-size:10.8px;line-height:10.8px;color:#0a0a0a;font-weight:bold;transform-origin:0 0;transform:scaleX(1.366);-webkit-text-stroke:0.5px #0a0a0a;">UE</span>
<span class="t" style="left:174.0px;transform-origin:0 0;top:2.8px;font-size:12.0px;line-height:12.0px;color:#3a3a3a;transform:scaleX(1.000);-webkit-text-stroke:0.42px #3a3a3a;">A</span>
<span class="t" style="left:369.5px;transform-origin:0 0;top:2.8px;font-size:12.0px;line-height:12.0px;color:#3a3a3a;transform:scaleX(1.000);-webkit-text-stroke:0.42px #3a3a3a;">B</span>
<span class="t" style="left:490.2px;transform-origin:0 0;top:2.8px;font-size:12.0px;line-height:12.0px;color:#3a3a3a;transform:scaleX(1.000);-webkit-text-stroke:0.42px #3a3a3a;">C</span>
<span class="t" style="left:608.7px;transform-origin:0 0;top:2.8px;font-size:12.0px;line-height:12.0px;color:#3a3a3a;transform:scaleX(1.000);-webkit-text-stroke:0.42px #3a3a3a;">D</span>
<span class="t" style="left:735.0px;transform-origin:0 0;top:2.8px;font-size:12.0px;line-height:12.0px;color:#3a3a3a;transform:scaleX(1.000);-webkit-text-stroke:0.42px #3a3a3a;">E</span>
<span class="t" style="left:840.8px;transform-origin:0 0;top:2.8px;font-size:12.0px;line-height:12.0px;color:#3a3a3a;transform:scaleX(1.000);-webkit-text-stroke:0.42px #3a3a3a;">F</span>
<span class="t" style="left:938.3px;transform-origin:0 0;top:2.8px;font-size:12.0px;line-height:12.0px;color:#3a3a3a;transform:scaleX(1.000);-webkit-text-stroke:0.42px #3a3a3a;">G</span>
<span class="t" style="left:1023.2px;transform-origin:0 0;top:2.8px;font-size:12.0px;line-height:12.0px;color:#3a3a3a;transform:scaleX(1.000);-webkit-text-stroke:0.42px #3a3a3a;">H</span>
<span class="t" style="left:1094.3px;transform-origin:0 0;top:2.8px;font-size:12.0px;line-height:12.0px;color:#3a3a3a;transform:scaleX(1.000);-webkit-text-stroke:0.42px #3a3a3a;">I</span>
<span class="t" style="left:1190.0px;transform-origin:0 0;top:2.8px;font-size:12.0px;line-height:12.0px;color:#3a3a3a;transform:scaleX(1.000);-webkit-text-stroke:0.42px #3a3a3a;">J</span>
<span class="t" style="left:1273.0px;transform-origin:0 0;top:2.8px;font-size:12.0px;line-height:12.0px;color:#3a3a3a;transform:scaleX(1.000);-webkit-text-stroke:0.42px #3a3a3a;">K</span>
<span class="t" style="left:1407.2px;transform-origin:0 0;top:2.8px;font-size:12.0px;line-height:12.0px;color:#3a3a3a;transform:scaleX(1.000);-webkit-text-stroke:0.42px #3a3a3a;">L</span>
<span class="t" style="left:1619.5px;transform-origin:0 0;top:2.8px;font-size:12.0px;line-height:12.0px;color:#3a3a3a;transform:scaleX(1.000);-webkit-text-stroke:0.42px #3a3a3a;">M</span>
<span class="t" style="left:18.0px;transform-origin:0 0;top:19.4px;font-size:12.6px;line-height:12.6px;color:#3e3e40;transform:scaleX(1.140);-webkit-text-stroke:0.42px #3e3e40;">1</span>
<span class="t" style="left:18.0px;transform-origin:0 0;top:35.1px;font-size:12.6px;line-height:12.6px;color:#3e3e40;transform:scaleX(1.140);-webkit-text-stroke:0.42px #3e3e40;">2</span>
<span class="t" style="left:18.0px;transform-origin:0 0;top:50.8px;font-size:12.6px;line-height:12.6px;color:#3e3e40;transform:scaleX(1.140);-webkit-text-stroke:0.42px #3e3e40;">3</span>
<span class="t" style="left:18.0px;transform-origin:0 0;top:66.5px;font-size:12.6px;line-height:12.6px;color:#3e3e40;transform:scaleX(1.140);-webkit-text-stroke:0.42px #3e3e40;">4</span>
<span class="t" style="left:18.0px;transform-origin:0 0;top:82.7px;font-size:12.6px;line-height:12.6px;color:#3e3e40;transform:scaleX(1.140);-webkit-text-stroke:0.42px #3e3e40;">5</span>
<span class="t" style="left:18.0px;transform-origin:0 0;top:101.1px;font-size:12.6px;line-height:12.6px;color:#3e3e40;transform:scaleX(1.140);-webkit-text-stroke:0.42px #3e3e40;">6</span>
<span class="t" style="left:18.0px;transform-origin:0 0;top:117.7px;font-size:12.6px;line-height:12.6px;color:#3e3e40;transform:scaleX(1.140);-webkit-text-stroke:0.42px #3e3e40;">7</span>
<span class="t" style="left:18.0px;transform-origin:0 0;top:137.4px;font-size:12.6px;line-height:12.6px;color:#3e3e40;transform:scaleX(1.140);-webkit-text-stroke:0.42px #3e3e40;">8</span>
<span class="t" style="left:18.0px;transform-origin:0 0;top:154.0px;font-size:12.6px;line-height:12.6px;color:#3e3e40;transform:scaleX(1.140);-webkit-text-stroke:0.42px #3e3e40;">9</span>
<span class="t" style="left:14.0px;transform-origin:0 0;top:169.9px;font-size:12.6px;line-height:12.6px;color:#3e3e40;transform:scaleX(1.140);-webkit-text-stroke:0.42px #3e3e40;">10</span>
<span class="t" style="left:14.5px;transform-origin:0 0;top:185.5px;font-size:12.6px;line-height:12.6px;color:#3e3e40;transform:scaleX(1.140);-webkit-text-stroke:0.42px #3e3e40;">11</span>
<span class="t" style="left:14.0px;transform-origin:0 0;top:201.2px;font-size:12.6px;line-height:12.6px;color:#3e3e40;transform:scaleX(1.140);-webkit-text-stroke:0.42px #3e3e40;">12</span>
<span class="t" style="left:14.0px;transform-origin:0 0;top:216.8px;font-size:12.6px;line-height:12.6px;color:#3e3e40;transform:scaleX(1.140);-webkit-text-stroke:0.42px #3e3e40;">13</span>
<span class="t" style="left:14.0px;transform-origin:0 0;top:232.5px;font-size:12.6px;line-height:12.6px;color:#3e3e40;transform:scaleX(1.140);-webkit-text-stroke:0.42px #3e3e40;">14</span>
<span class="t" style="left:14.0px;transform-origin:0 0;top:248.1px;font-size:12.6px;line-height:12.6px;color:#3e3e40;transform:scaleX(1.140);-webkit-text-stroke:0.42px #3e3e40;">15</span>
<span class="t" style="left:14.0px;transform-origin:0 0;top:263.8px;font-size:12.6px;line-height:12.6px;color:#3e3e40;transform:scaleX(1.140);-webkit-text-stroke:0.42px #3e3e40;">16</span>
<span class="t" style="left:14.0px;transform-origin:0 0;top:279.4px;font-size:12.6px;line-height:12.6px;color:#3e3e40;transform:scaleX(1.140);-webkit-text-stroke:0.42px #3e3e40;">17</span>
<span class="t" style="left:14.0px;transform-origin:0 0;top:295.1px;font-size:12.6px;line-height:12.6px;color:#3e3e40;transform:scaleX(1.140);-webkit-text-stroke:0.42px #3e3e40;">18</span>
<span class="t" style="left:14.0px;transform-origin:0 0;top:310.7px;font-size:12.6px;line-height:12.6px;color:#3e3e40;transform:scaleX(1.140);-webkit-text-stroke:0.42px #3e3e40;">19</span>
<span class="t" style="left:14.0px;transform-origin:0 0;top:326.4px;font-size:12.6px;line-height:12.6px;color:#3e3e40;transform:scaleX(1.140);-webkit-text-stroke:0.42px #3e3e40;">20</span>
<span class="t" style="left:14.0px;transform-origin:0 0;top:342.0px;font-size:12.6px;line-height:12.6px;color:#3e3e40;transform:scaleX(1.140);-webkit-text-stroke:0.42px #3e3e40;">21</span>
<span class="t" style="left:14.0px;transform-origin:0 0;top:357.7px;font-size:12.6px;line-height:12.6px;color:#3e3e40;transform:scaleX(1.140);-webkit-text-stroke:0.42px #3e3e40;">22</span>
<span class="t" style="left:14.0px;transform-origin:0 0;top:373.3px;font-size:12.6px;line-height:12.6px;color:#3e3e40;transform:scaleX(1.140);-webkit-text-stroke:0.42px #3e3e40;">23</span>
<span class="t" style="left:14.0px;transform-origin:0 0;top:389.0px;font-size:12.6px;line-height:12.6px;color:#3e3e40;transform:scaleX(1.140);-webkit-text-stroke:0.42px #3e3e40;">24</span>
<span class="t" style="left:14.0px;transform-origin:0 0;top:404.6px;font-size:12.6px;line-height:12.6px;color:#3e3e40;transform:scaleX(1.140);-webkit-text-stroke:0.42px #3e3e40;">25</span>
<span class="t" style="left:14.0px;transform-origin:0 0;top:420.3px;font-size:12.6px;line-height:12.6px;color:#3e3e40;transform:scaleX(1.140);-webkit-text-stroke:0.42px #3e3e40;">26</span>
<span class="t" style="left:14.0px;transform-origin:0 0;top:435.9px;font-size:12.6px;line-height:12.6px;color:#3e3e40;transform:scaleX(1.140);-webkit-text-stroke:0.42px #3e3e40;">27</span>
<span class="t" style="left:14.0px;transform-origin:0 0;top:451.6px;font-size:12.6px;line-height:12.6px;color:#3e3e40;transform:scaleX(1.140);-webkit-text-stroke:0.42px #3e3e40;">28</span>
<span class="t" style="left:14.0px;transform-origin:0 0;top:467.2px;font-size:12.6px;line-height:12.6px;color:#3e3e40;transform:scaleX(1.140);-webkit-text-stroke:0.42px #3e3e40;">29</span>
<span class="t" style="left:14.0px;transform-origin:0 0;top:482.9px;font-size:12.6px;line-height:12.6px;color:#3e3e40;transform:scaleX(1.140);-webkit-text-stroke:0.42px #3e3e40;">30</span>
<span class="t" style="left:14.0px;transform-origin:0 0;top:498.5px;font-size:12.6px;line-height:12.6px;color:#3e3e40;transform:scaleX(1.140);-webkit-text-stroke:0.42px #3e3e40;">31</span>
<span class="t" style="left:14.0px;transform-origin:0 0;top:514.2px;font-size:12.6px;line-height:12.6px;color:#3e3e40;transform:scaleX(1.140);-webkit-text-stroke:0.42px #3e3e40;">32</span>
<span class="t" style="left:14.0px;transform-origin:0 0;top:529.8px;font-size:12.6px;line-height:12.6px;color:#3e3e40;transform:scaleX(1.140);-webkit-text-stroke:0.42px #3e3e40;">33</span>
<span class="t" style="left:14.0px;transform-origin:0 0;top:545.5px;font-size:12.6px;line-height:12.6px;color:#3e3e40;transform:scaleX(1.140);-webkit-text-stroke:0.42px #3e3e40;">34</span>
<span class="t" style="left:14.0px;transform-origin:0 0;top:561.1px;font-size:12.6px;line-height:12.6px;color:#3e3e40;transform:scaleX(1.140);-webkit-text-stroke:0.42px #3e3e40;">35</span>
<span class="t" style="left:14.0px;transform-origin:0 0;top:576.8px;font-size:12.6px;line-height:12.6px;color:#3e3e40;transform:scaleX(1.140);-webkit-text-stroke:0.42px #3e3e40;">36</span>
<span class="t" style="left:14.0px;transform-origin:0 0;top:592.4px;font-size:12.6px;line-height:12.6px;color:#3e3e40;transform:scaleX(1.140);-webkit-text-stroke:0.42px #3e3e40;">37</span>
<span class="t" style="left:14.0px;transform-origin:0 0;top:608.1px;font-size:12.6px;line-height:12.6px;color:#3e3e40;transform:scaleX(1.140);-webkit-text-stroke:0.42px #3e3e40;">38</span>
<span class="t" style="left:14.0px;transform-origin:0 0;top:623.7px;font-size:12.6px;line-height:12.6px;color:#3e3e40;transform:scaleX(1.140);-webkit-text-stroke:0.42px #3e3e40;">39</span>
<div class="a" style="left:41.6px;top:17.0px;width:2.6px;height:402.2px;background:#2a2acc;"></div>
<div class="a" style="left:41.5px;top:17.0px;width:1202.5px;height:1.8px;background:#1616c8;"></div>
<div class="a" style="left:1240.0px;top:17.0px;width:5.0px;height:402.2px;background:#1010d4;"></div>
<div class="a" style="left:41.5px;top:415.0px;width:1203.5px;height:4.2px;background:#1010d4;"></div>
<div class="a" style="left:43.5px;top:45.0px;width:269.5px;height:4.2px;background:#14145e;"></div>
<div class="a" style="left:311.5px;top:33.7px;width:1.7px;height:11.7px;background:#14145e;"></div>
<div class="a" style="left:43.5px;top:33.4px;width:269.5px;height:1.3px;background:#30305e;"></div>
<div class="a" style="left:309.8px;top:44.4px;width:8.2px;height:7.2px;background:#14145e;"></div>
<div class="a" style="left:313.2px;top:43.4px;width:1.8px;height:8.2px;background:#f0d8f8;"></div>
<div class="a" style="left:307.3px;top:45.0px;width:2.5px;height:4.2px;background:#fffbd0;"></div>
<svg style="left:1221.5px;top:410.0px" width="24" height="20" viewBox="0 0 24 20"><path d="M1 1 L10 1 L7.2 3.8 L17.5 13 L20.5 10 L20.5 18.5 L11 18.5 L14.2 15.6 L4 6.5 L1 9.5 Z" fill="#111" stroke="#fff" stroke-width="1.3" stroke-linejoin="round"/><path d="M6 5 L16 14" stroke="#7d7dff" stroke-width="1"/></svg>
</div>
<div class="a" style="left:1681px;top:267px;width:29px;height:631px;background:#e9e9e9;border-left:1px solid #cfcfcf;box-sizing:border-box;"></div>
<div class="a" style="left:1684px;top:268px;width:24px;height:11px;box-sizing:border-box;border:1.5px solid #8a8a8a;background:#f6f6f6;border-radius:2px;"></div><div class="a" style="left:1688px;top:272.5px;width:16px;height:2px;background:#8a8a8a;"></div>
<svg style="left:1687px;top:288px" width="16" height="9" viewBox="0 0 16 9"><path d="M0.5 8.5 L8 0.5 L15.5 8.5 Z" fill="#555"/></svg>
<div class="a" style="left:1683px;top:308px;width:25px;height:107px;box-sizing:border-box;border:1px solid #b9b9b9;border-radius:3px;background:linear-gradient(90deg,#fbfbfb,#f0f0f0 50%,#e4e4e4);"></div>
<div class="a" style="left:1689px;top:354px;width:13px;height:1px;background:#8d8d8d;"></div>
<div class="a" style="left:1689px;top:357px;width:13px;height:1px;background:#8d8d8d;"></div>
<div class="a" style="left:1689px;top:360px;width:13px;height:1px;background:#8d8d8d;"></div>
<div class="a" style="left:1689px;top:363px;width:13px;height:1px;background:#8d8d8d;"></div>
<svg style="left:1687px;top:879px" width="16" height="9" viewBox="0 0 16 9"><path d="M0.5 0.5 L8 8.5 L15.5 0.5 Z" fill="#555"/></svg>
<div class="a" style="left:14px;top:898px;width:1696px;height:25.6px;background:linear-gradient(#e1e3e8,#e4e6eb 50%,#dcdee4);border-bottom:1.5px solid #a9aaae;box-sizing:border-box;"></div>
<div class="a" style="left:24px;top:904px;width:2px;height:12px;background:#4a4a4a;"></div>
<svg style="left:27px;top:904px" width="8" height="12" viewBox="0 0 8 12"><path d="M8 0 L0 6.0 L8 12 Z" fill="#4a4a4a"/></svg>
<svg style="left:53px;top:904px" width="8" height="12" viewBox="0 0 8 12"><path d="M8 0 L0 6.0 L8 12 Z" fill="#4a4a4a"/></svg>
<svg style="left:77px;top:904px" width="8" height="12" viewBox="0 0 8 12"><path d="M0 0 L8 6.0 L0 12 Z" fill="#4a4a4a"/></svg>
<svg style="left:102px;top:904px" width="8" height="12" viewBox="0 0 8 12"><path d="M0 0 L8 6.0 L0 12 Z" fill="#4a4a4a"/></svg>
<div class="a" style="left:111px;top:904px;width:2px;height:12px;background:#4a4a4a;"></div>
<svg style="left:120px;top:898px" width="190" height="26" viewBox="0 0 190 26"><path d="M4 0 L124 0 L98 24 L4 24 Z" fill="#fff" stroke="#a8a8a8" stroke-width="1"/><path d="M5 0 L123 0" stroke="#fff" stroke-width="2"/><path d="M103 24 L126 3 L174 3 L153 24 Z" fill="#ececec" stroke="#b4b4b4" stroke-width="1"/><path d="M98 24 L4 24" stroke="#c9a04a" stroke-width="1.5"/></svg>
<span class="t" style="left:141px;top:900px;font-size:21px;line-height:22px;font-weight:bold;color:#3d4a5e;transform-origin:0 0;transform:scaleX(1.03);">Orders</span>
<svg style="left:243px;top:901px" width="26" height="20" viewBox="0 0 26 20"><path d="M6 5 L22 5 L22 15 L14 15 L10 18 L6 15 Z" fill="#f3f6fb" stroke="#5f6f94" stroke-width="1.5"/><path d="M5 0 L6.4 3 L9.5 1.8 L8 4.8 L11 6 L8 7 L9.3 10 L6.3 8.6 L5 11.5 L3.8 8.6 L0.8 10 L2 7 L-1 6 L2 4.8 L0.6 1.8 L3.7 3 Z" fill="#f0b429" stroke="#c98a12" stroke-width="0.5"/></svg>
<div class="a" style="left:442px;top:900px;width:13px;height:22px;box-sizing:border-box;border:1px solid #a9a9a9;background:#f8f8f8;border-radius:2px;"></div><div class="a" style="left:447.6px;top:905px;width:1.4px;height:11px;background:#666;"></div>
<div class="a" style="left:456px;top:899px;width:31px;height:23px;background:#e4e7ed;border-right:1px solid #b9bbc0;box-sizing:border-box;"></div>
<svg style="left:464px;top:904px" width="9" height="13" viewBox="0 0 9 13"><path d="M9 0 L0 6.5 L9 13 Z" fill="#4a4a4a"/></svg>
<div class="a" style="left:486px;top:900px;width:730px;height:21px;box-sizing:border-box;border:1px solid #b3b4b9;border-radius:3px;background:linear-gradient(#f8f8fa,#eeeff2 50%,#dddee3);"></div>
<div class="a" style="left:845px;top:905px;width:1px;height:11px;background:#8d8d8d;"></div>
<div class="a" style="left:848px;top:905px;width:1px;height:11px;background:#8d8d8d;"></div>
<div class="a" style="left:851px;top:905px;width:1px;height:11px;background:#8d8d8d;"></div>
<div class="a" style="left:854px;top:905px;width:1px;height:11px;background:#8d8d8d;"></div>
<svg style="left:1647px;top:904px" width="9" height="13" viewBox="0 0 9 13"><path d="M0 0 L9 6.5 L0 13 Z" fill="#4a4a4a"/></svg>
<div class="a" style="left:1669px;top:900px;width:11px;height:21px;box-sizing:border-box;border:1px solid #a9a9a9;background:#f8f8f8;border-radius:2px;"></div><div class="a" style="left:1674px;top:905px;width:1px;height:11px;background:#777;"></div>
<div class="a" style="left:1682px;top:898px;width:28px;height:25px;background:#dfe2e9;border-bottom:1px solid #b3b3b3;box-sizing:border-box;"></div>
<div class="a" style="left:14px;top:923.6px;width:1696px;height:35.4px;background:linear-gradient(#eeeff1 0,#e4e5e8 8%,#d9dade 45%,#c9cace 100%);border-bottom:1.4px solid #9a9a9e;box-sizing:border-box;"></div>
<span class="t" style="left:28.0px;transform-origin:0 0;top:932.8px;font-size:16.0px;line-height:16.0px;color:#555;transform:scaleX(1.168);-webkit-text-stroke:0.42px #555;">Ready</span>
<div class="a" style="left:99px;top:927px;width:1px;height:27px;background:#b3b3b3;"></div><div class="a" style="left:100px;top:927px;width:1px;height:27px;background:#f6f6f6;"></div>
<div class="a" style="left:160px;top:927px;width:1px;height:27px;background:#b3b3b3;"></div><div class="a" style="left:161px;top:927px;width:1px;height:27px;background:#f6f6f6;"></div>
<svg style="left:115px;top:929px" width="28" height="22" viewBox="0 0 28 22"><rect x="2" y="2" width="25" height="19" fill="#f6f8fc" stroke="#8b9bc0" stroke-width="1.2"/><rect x="2.6" y="2.6" width="23.8" height="4.4" fill="#5b8fe6"/><line x1="5" x2="25" y1="10" y2="10" stroke="#7fa0dc" stroke-width="1.6"/><line x1="5" x2="25" y1="14" y2="14" stroke="#7fa0dc" stroke-width="1.6"/><line x1="5" x2="25" y1="18" y2="18" stroke="#7fa0dc" stroke-width="1.6"/><line x1="12" x2="12" y1="8" y2="20" stroke="#f6f8fc" stroke-width="1.2"/><line x1="19" x2="19" y1="8" y2="20" stroke="#f6f8fc" stroke-width="1.2"/><circle cx="6.5" cy="5" r="3.7" fill="#e4532f" stroke="#c2391c" stroke-width="0.8"/><circle cx="5.6" cy="3.9" r="1.3" fill="#f6a88e"/></svg>
<div class="a" style="left:1268px;top:927px;width:1px;height:27px;background:#b3b3b3;"></div><div class="a" style="left:1269px;top:927px;width:1px;height:27px;background:#f6f6f6;"></div>
<svg style="left:1282px;top:932px" width="23" height="16" viewBox="0 0 23 16"><rect x="1" y="1" width="21" height="14" fill="#fafafa" stroke="#666" stroke-width="1.4"/><path d="M1 5.7 L22 5.7 M1 10.3 L22 10.3 M8 1 L8 15 M15 1 L15 15" stroke="#666" stroke-width="1.3"/></svg>
<svg style="left:1314px;top:930px" width="25" height="20" viewBox="0 0 25 20"><rect x="1" y="1" width="23" height="18" fill="#cfcfcf" stroke="#6e6e6e" stroke-width="1.5"/><rect x="6" y="4" width="13" height="12" fill="#f7f7f7" stroke="#7c7c7c" stroke-width="1.3"/></svg>
<div class="a" style="left:1343px;top:925px;width:35px;height:30px;box-sizing:border-box;border:2px solid #eebd3c;border-radius:3px;background:linear-gradient(#fde9a8,#fbd466);"></div>
<svg style="left:1348px;top:929px" width="25" height="22" viewBox="0 0 25 22"><rect x="1" y="1" width="23" height="20" fill="#a9a9a9" stroke="#5f5f5f" stroke-width="1.4"/><rect x="2.6" y="2.4" width="5.6" height="10" fill="#fff"/><rect x="9.8" y="2.4" width="6" height="10" fill="#fff"/><rect x="1.7" y="13.6" width="21.6" height="6.7" fill="#8f8f8f"/></svg>
<span class="t" style="left:1392.5px;transform-origin:0 0;top:932.5px;font-size:16.0px;line-height:16.0px;color:#4e4e52;transform:scaleX(1.140);-webkit-text-stroke:0.42px #4e4e52;">60%</span>
<svg style="left:1444px;top:926px" width="28" height="28" viewBox="0 0 28 28"><circle cx="14" cy="14" r="12.4" fill="#f7f7f7" stroke="#8e8e8e" stroke-width="1.6"/><circle cx="14" cy="14" r="10.6" fill="none" stroke="#fff" stroke-width="1.4"/><rect x="7" y="12.6" width="14" height="3" rx="1" fill="#4d4d4d"/></svg>
<div class="a" style="left:1472px;top:939.5px;width:177px;height:1.2px;background:#a9a9a9;"></div><div class="a" style="left:1472px;top:940.7px;width:177px;height:1px;background:#f4f4f4;"></div>
<div class="a" style="left:1559px;top:935px;width:1px;height:11px;background:#b0b0b0;"></div>
<svg style="left:1517px;top:927px" width="19" height="25" viewBox="0 0 19 25"><path d="M1.5 1.5 L17.5 1.5 L17.5 14 L9.5 23 L1.5 14 Z" fill="#f4f4f4" stroke="#7f7f7f" stroke-width="1.6" stroke-linejoin="round"/><path d="M3.5 3.5 L15.5 3.5 L15.5 13 L9.5 20 L3.5 13 Z" fill="none" stroke="#fff" stroke-width="1"/></svg>
<svg style="left:1648px;top:926px" width="28" height="28" viewBox="0 0 28 28"><circle cx="14" cy="14" r="12.4" fill="#f7f7f7" stroke="#8e8e8e" stroke-width="1.6"/><circle cx="14" cy="14" r="10.6" fill="none" stroke="#fff" stroke-width="1.4"/><rect x="7" y="12.6" width="14" height="3" rx="1" fill="#4d4d4d"/><rect x="12.5" y="7" width="3" height="14" rx="1" fill="#4d4d4d"/></svg>
<div class="a" style="left:1705.2px;top:940.0px;width:3px;height:3px;border-radius:1px;background:#ababab;box-shadow:1px 1px 0 #f4f4f4;"></div>
<div class="a" style="left:1697.5px;top:946.5px;width:3px;height:3px;border-radius:1px;background:#ababab;box-shadow:1px 1px 0 #f4f4f4;"></div>
<div class="a" style="left:1705.2px;top:946.5px;width:3px;height:3px;border-radius:1px;background:#ababab;box-shadow:1px 1px 0 #f4f4f4;"></div>
<div class="a" style="left:1690.0px;top:952.8px;width:3px;height:3px;border-radius:1px;background:#ababab;box-shadow:1px 1px 0 #f4f4f4;"></div>
<div class="a" style="left:1697.5px;top:952.8px;width:3px;height:3px;border-radius:1px;background:#ababab;box-shadow:1px 1px 0 #f4f4f4;"></div>
<div class="a" style="left:1705.2px;top:952.8px;width:3px;height:3px;border-radius:1px;background:#ababab;box-shadow:1px 1px 0 #f4f4f4;"></div>
</div></body></html>
